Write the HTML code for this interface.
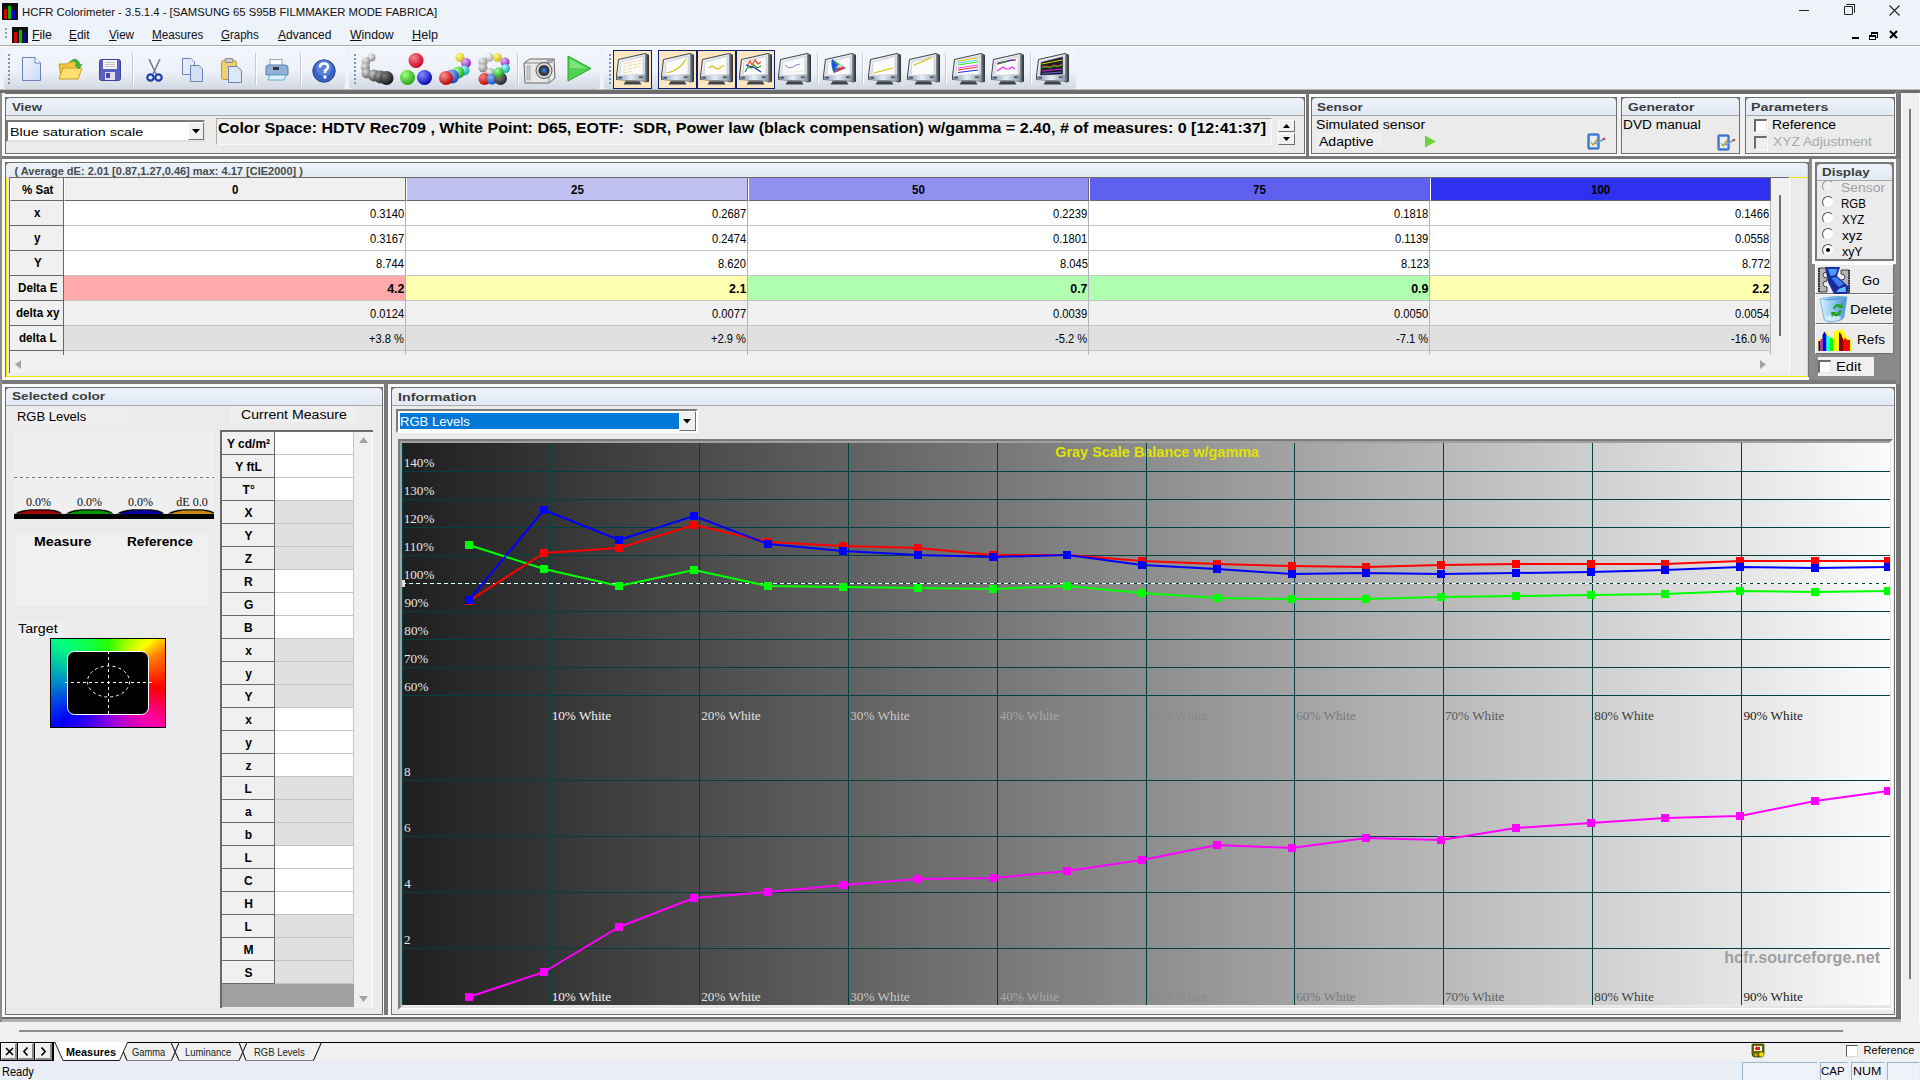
<!DOCTYPE html><html><head><meta charset="utf-8"><title>HCFR</title><style>
*{margin:0;padding:0;box-sizing:border-box}
html,body{width:1920px;height:1080px;overflow:hidden;background:#f0f0f0;font-family:"Liberation Sans",sans-serif;font-size:12px;color:#000}
.a{position:absolute}
.t{position:absolute;white-space:nowrap;line-height:1}
.hdr{position:absolute;background:linear-gradient(#eef3fa,#e2e9f4);border-bottom:1px solid #a8a8a8;font-weight:bold;color:#3c3c3c;font-size:12px;padding-left:7px;line-height:16px;border-radius:4px 4px 0 0}
.pane{position:absolute;border:1px solid #6f6f6f;background:#ebebeb}
.u{text-decoration:underline}
</style></head><body>
<div class="a" style="left:0;top:0;width:1920px;height:23px;background:#eef2f9"></div>
<svg class="a" style="left:2px;top:3px" width="16" height="17"><rect x="0" y="0" width="16" height="17" fill="#111"/><rect x="2" y="6" width="3" height="10" fill="#d00"/><rect x="6" y="3" width="3" height="13" fill="#0b0"/><rect x="10" y="7" width="3" height="9" fill="#00c"/></svg>
<div class="t" style="left:22.09px;top:7.00px;font-size:11.30px;font-family:'Liberation Sans',sans-serif;color:#111;">HCFR Colorimeter - 3.5.1.4 - [SAMSUNG 65 S95B FILMMAKER MODE FABRICA]</div>
<div class="a" style="left:1799px;top:10px;width:10px;height:1px;background:#222"></div>
<div class="a" style="left:1844px;top:6px;width:9px;height:9px;border:1px solid #222;border-radius:1px"></div><div class="a" style="left:1846px;top:4px;width:9px;height:9px;border-top:1px solid #222;border-right:1px solid #222;border-radius:1px"></div>
<svg class="a" style="left:1889px;top:5px" width="11" height="11"><path d="M0.5 0.5L10.5 10.5M10.5 0.5L0.5 10.5" stroke="#222" stroke-width="1.1"/></svg>
<div class="a" style="left:0;top:23px;width:1920px;height:22px;background:#eef2f9"></div>
<div class="a" style="left:0;top:45px;width:1920px;height:1px;background:#a9a9a9"></div>
<div class="a" style="left:5px;top:28px;width:2px;height:12px;background:repeating-linear-gradient(#8aa0c0 0 2px,transparent 2px 4px)"></div>
<svg class="a" style="left:12px;top:27px" width="16" height="16"><rect width="16" height="16" fill="#111"/><rect x="2" y="5" width="3" height="11" fill="#d00"/><rect x="7" y="3" width="3" height="13" fill="#0b0"/><rect x="11" y="6" width="3" height="10" fill="#00c"/></svg>
<div class="t" style="left:31.51px;top:29.00px;font-size:12.00px;font-family:'Liberation Sans',sans-serif;color:#111;transform:scaleX(1.0347);transform-origin:0 0;"><span class="u">F</span>ile</div>
<div class="t" style="left:69.05px;top:29.00px;font-size:12.00px;font-family:'Liberation Sans',sans-serif;color:#111;transform:scaleX(0.9909);transform-origin:0 0;"><span class="u">E</span>dit</div>
<div class="t" style="left:108.75px;top:29.00px;font-size:12.00px;font-family:'Liberation Sans',sans-serif;color:#111;transform:scaleX(0.9690);transform-origin:0 0;"><span class="u">V</span>iew</div>
<div class="t" style="left:152.06px;top:29.00px;font-size:12.00px;font-family:'Liberation Sans',sans-serif;color:#111;transform:scaleX(0.9747);transform-origin:0 0;"><span class="u">M</span>easures</div>
<div class="t" style="left:221.42px;top:29.00px;font-size:12.00px;font-family:'Liberation Sans',sans-serif;color:#111;transform:scaleX(0.9585);transform-origin:0 0;"><span class="u">G</span>raphs</div>
<div class="t" style="left:278.00px;top:29.00px;font-size:12.00px;font-family:'Liberation Sans',sans-serif;color:#111;"><span class="u">A</span>dvanced</div>
<div class="t" style="left:350.00px;top:29.00px;font-size:12.00px;font-family:'Liberation Sans',sans-serif;color:#111;transform:scaleX(1.0241);transform-origin:0 0;"><span class="u">W</span>indow</div>
<div class="t" style="left:411.99px;top:29.00px;font-size:12.00px;font-family:'Liberation Sans',sans-serif;color:#111;transform:scaleX(1.0551);transform-origin:0 0;"><span class="u">H</span>elp</div>
<div class="a" style="left:1852px;top:37px;width:7px;height:2px;background:#000"></div>
<div class="a" style="left:1871px;top:32px;width:7px;height:6px;border:1px solid #000;border-top-width:2px"></div><div class="a" style="left:1869px;top:35px;width:7px;height:5px;border:1px solid #000;border-top-width:2px;background:#eff3f9"></div>
<svg class="a" style="left:1889px;top:30px" width="9" height="9"><path d="M1 1L8 8M8 1L1 8" stroke="#000" stroke-width="2.2"/></svg>
<div class="a" style="left:0;top:46px;width:1920px;height:44px;background:#eef2f9;border-top:1px solid #fff"></div>
<div class="a" style="left:4px;top:48px;width:341px;height:41px;border-radius:4px;background:linear-gradient(#f3f6fb 0%,#eef2f8 55%,#d3d9e3 100%)"></div>
<div class="a" style="left:349px;top:48px;width:251px;height:41px;border-radius:4px;background:linear-gradient(#f3f6fb 0%,#eef2f8 55%,#d3d9e3 100%)"></div>
<div class="a" style="left:604px;top:48px;width:472px;height:41px;border-radius:4px;background:linear-gradient(#f3f6fb 0%,#eef2f8 55%,#d3d9e3 100%)"></div>
<div class="a" style="left:8px;top:54px;width:2px;height:30px;background:repeating-linear-gradient(#7d96bd 0 2px,transparent 2px 4px)"></div>
<div class="a" style="left:354px;top:54px;width:2px;height:30px;background:repeating-linear-gradient(#7d96bd 0 2px,transparent 2px 4px)"></div>
<div class="a" style="left:609px;top:54px;width:2px;height:30px;background:repeating-linear-gradient(#7d96bd 0 2px,transparent 2px 4px)"></div>
<div class="a" style="left:0;top:89px;width:1920px;height:1px;background:#b8bcc2"></div><div class="a" style="left:0;top:90px;width:1920px;height:4px;background:#6d6d6d"></div>
<div class="a" style="left:132px;top:53px;width:1px;height:32px;background:#c5ccd6"></div><div class="a" style="left:133px;top:53px;width:1px;height:32px;background:#fff"></div>
<div class="a" style="left:255px;top:53px;width:1px;height:32px;background:#c5ccd6"></div><div class="a" style="left:256px;top:53px;width:1px;height:32px;background:#fff"></div>
<div class="a" style="left:300px;top:53px;width:1px;height:32px;background:#c5ccd6"></div><div class="a" style="left:301px;top:53px;width:1px;height:32px;background:#fff"></div>
<div class="a" style="left:517px;top:53px;width:1px;height:32px;background:#c5ccd6"></div><div class="a" style="left:518px;top:53px;width:1px;height:32px;background:#fff"></div>
<div class="a" style="left:817px;top:53px;width:1px;height:32px;background:#c5ccd6"></div><div class="a" style="left:818px;top:53px;width:1px;height:32px;background:#fff"></div>
<div class="a" style="left:862px;top:53px;width:1px;height:32px;background:#c5ccd6"></div><div class="a" style="left:863px;top:53px;width:1px;height:32px;background:#fff"></div>
<div class="a" style="left:945px;top:53px;width:1px;height:32px;background:#c5ccd6"></div><div class="a" style="left:946px;top:53px;width:1px;height:32px;background:#fff"></div>
<div class="a" style="left:1030px;top:53px;width:1px;height:32px;background:#c5ccd6"></div><div class="a" style="left:1031px;top:53px;width:1px;height:32px;background:#fff"></div>
<svg class="a" style="left:22px;top:57px" width="19" height="24"><defs><linearGradient id="gd" x1="0" y1="0" x2="1" y2="1"><stop offset="0" stop-color="#f4f8ff"/><stop offset="1" stop-color="#c9d9f3"/></linearGradient></defs><path d="M0.5 0.5H13L18.5 6V23.5H0.5Z" fill="url(#gd)" stroke="#6b83b8"/><path d="M13 0.5V6H18.5" fill="#fff" stroke="#6b83b8"/></svg>
<svg class="a" style="left:58px;top:58px" width="25" height="23"><path d="M1 6H9L11 4H19V20H3Z" fill="#f0c840" stroke="#c9a020"/><path d="M1 21L5 10H24L20 21Z" fill="#ffe070" stroke="#c9a020"/><path d="M12 4C16 -1 21 1 22 7L24 6L21 11L17 7L19 7C18 3 15 2 12 4Z" fill="#3cb83c" stroke="#2a8a2a" stroke-width="0.6"/></svg>
<svg class="a" style="left:99px;top:59px" width="22" height="22"><rect x="0.5" y="0.5" width="21" height="21" rx="2" fill="#5a5fc0" stroke="#3e4398"/><rect x="4" y="1" width="14" height="9" fill="#f4f4f4"/><path d="M6 3.5H16M6 5.5H16M6 7.5H16" stroke="#aaa" stroke-width="0.7"/><rect x="6" y="13" width="10" height="8" fill="#dde"/><rect x="7" y="14" width="4" height="5" fill="#4448a8"/></svg>
<svg class="a" style="left:146px;top:59px" width="17" height="23"><path d="M3 0L10 15M14 0L7 15" stroke="#707a8a" stroke-width="1.5"/><circle cx="4.5" cy="18.5" r="3.2" fill="none" stroke="#1a3fb0" stroke-width="2.2"/><circle cx="12.5" cy="18.5" r="3.2" fill="none" stroke="#1a3fb0" stroke-width="2.2"/></svg>
<svg class="a" style="left:182px;top:58px" width="22" height="24"><path d="M0.5 0.5H9L12.5 4V16.5H0.5Z" fill="#e4ecfa" stroke="#6b83b8"/><path d="M8.5 7.5H17L20.5 11V23.5H8.5Z" fill="#d2e0f6" stroke="#6b83b8"/></svg>
<svg class="a" style="left:221px;top:58px" width="21" height="25"><rect x="0.5" y="2.5" width="15" height="19" rx="2" fill="#f0d070" stroke="#b89840"/><rect x="4" y="0.5" width="8" height="4" rx="1" fill="#ccc" stroke="#888"/><path d="M7.5 8.5H16L20.5 12.5V24.5H7.5Z" fill="#dce8fa" stroke="#6b83b8"/></svg>
<svg class="a" style="left:265px;top:59px" width="24" height="23"><rect x="5" y="0.5" width="12" height="7" fill="#fff" stroke="#9ab"/><path d="M1 8Q1 6 4 6H20Q23 6 23 9V16H1Z" fill="#8fb0d8" stroke="#5f7fa8"/><rect x="8" y="8" width="6" height="3" fill="#333"/><path d="M5 16L3 21H19L21 16Z" fill="#dfefff" stroke="#6ac"/></svg>
<svg class="a" style="left:312px;top:59px" width="24" height="24"><circle cx="12" cy="12" r="11.2" fill="#3a62c8" stroke="#22408a" stroke-width="1"/><circle cx="12" cy="9" r="8" fill="#6f95e6" opacity="0.6"/><path d="M8 8.5Q8 4.5 12 4.5Q16 4.5 16 8Q16 10 13 11.5V14" stroke="#fff" stroke-width="2.6" fill="none"/><circle cx="13" cy="18" r="1.7" fill="#fff"/></svg>
<svg class="a" style="left:361px;top:53px" width="33" height="33"><defs><radialGradient id="bg0" cx="0.35" cy="0.3" r="0.75"><stop offset="0" stop-color="#f8f8f8"/><stop offset="1" stop-color="#8a8a8a"/></radialGradient><radialGradient id="bg1" cx="0.35" cy="0.3" r="0.75"><stop offset="0" stop-color="#f0f0f0"/><stop offset="1" stop-color="#808080"/></radialGradient><radialGradient id="bg2" cx="0.35" cy="0.3" r="0.75"><stop offset="0" stop-color="#e8e8e8"/><stop offset="1" stop-color="#707070"/></radialGradient><radialGradient id="bg3" cx="0.35" cy="0.3" r="0.75"><stop offset="0" stop-color="#e0e0e0"/><stop offset="1" stop-color="#606060"/></radialGradient><radialGradient id="bg4" cx="0.35" cy="0.3" r="0.75"><stop offset="0" stop-color="#c8c8c8"/><stop offset="1" stop-color="#404040"/></radialGradient><radialGradient id="bg5" cx="0.35" cy="0.3" r="0.75"><stop offset="0" stop-color="#a0a0a0"/><stop offset="1" stop-color="#282828"/></radialGradient><radialGradient id="bg6" cx="0.35" cy="0.3" r="0.75"><stop offset="0" stop-color="#808080"/><stop offset="1" stop-color="#101010"/></radialGradient><radialGradient id="bg7" cx="0.35" cy="0.3" r="0.75"><stop offset="0" stop-color="#ff8090"/><stop offset="1" stop-color="#c0001a"/></radialGradient><radialGradient id="bg8" cx="0.35" cy="0.3" r="0.75"><stop offset="0" stop-color="#a0ff80"/><stop offset="1" stop-color="#20a010"/></radialGradient><radialGradient id="bg9" cx="0.35" cy="0.3" r="0.75"><stop offset="0" stop-color="#8090ff"/><stop offset="1" stop-color="#0000b0"/></radialGradient><radialGradient id="bg10" cx="0.35" cy="0.3" r="0.75"><stop offset="0" stop-color="#ffff90"/><stop offset="1" stop-color="#d0b800"/></radialGradient><radialGradient id="bg11" cx="0.35" cy="0.3" r="0.75"><stop offset="0" stop-color="#f0b0ff"/><stop offset="1" stop-color="#8020b0"/></radialGradient><radialGradient id="bg12" cx="0.35" cy="0.3" r="0.75"><stop offset="0" stop-color="#b0ffff"/><stop offset="1" stop-color="#10a0b0"/></radialGradient><radialGradient id="bg13" cx="0.35" cy="0.3" r="0.75"><stop offset="0" stop-color="#a0ffa0"/><stop offset="1" stop-color="#10a010"/></radialGradient><radialGradient id="bg14" cx="0.35" cy="0.3" r="0.75"><stop offset="0" stop-color="#a0c0ff"/><stop offset="1" stop-color="#1040c0"/></radialGradient><radialGradient id="bg15" cx="0.35" cy="0.3" r="0.75"><stop offset="0" stop-color="#ff9090"/><stop offset="1" stop-color="#b00000"/></radialGradient><radialGradient id="bg16" cx="0.35" cy="0.3" r="0.75"><stop offset="0" stop-color="#ffffff"/><stop offset="1" stop-color="#a0a0a0"/></radialGradient><radialGradient id="bg17" cx="0.35" cy="0.3" r="0.75"><stop offset="0" stop-color="#ffff90"/><stop offset="1" stop-color="#d0b000"/></radialGradient><radialGradient id="bg18" cx="0.35" cy="0.3" r="0.75"><stop offset="0" stop-color="#f0f0f0"/><stop offset="1" stop-color="#888"/></radialGradient><radialGradient id="bg19" cx="0.35" cy="0.3" r="0.75"><stop offset="0" stop-color="#e8e8e8"/><stop offset="1" stop-color="#808080"/></radialGradient><radialGradient id="bg20" cx="0.35" cy="0.3" r="0.75"><stop offset="0" stop-color="#f0f0f0"/><stop offset="1" stop-color="#909090"/></radialGradient><radialGradient id="bg21" cx="0.35" cy="0.3" r="0.75"><stop offset="0" stop-color="#ff8080"/><stop offset="1" stop-color="#b00000"/></radialGradient><radialGradient id="bg22" cx="0.35" cy="0.3" r="0.75"><stop offset="0" stop-color="#90b0ff"/><stop offset="1" stop-color="#1050c0"/></radialGradient><radialGradient id="bg23" cx="0.35" cy="0.3" r="0.75"><stop offset="0" stop-color="#909090"/><stop offset="1" stop-color="#202020"/></radialGradient></defs><circle cx="10.5" cy="4.5" r="4" fill="url(#bg0)"/><circle cx="5" cy="8.5" r="4.3" fill="url(#bg1)"/><circle cx="4.5" cy="14.5" r="4.5" fill="url(#bg2)"/><circle cx="5.5" cy="20.5" r="5" fill="url(#bg3)"/><circle cx="13" cy="22.5" r="6" fill="url(#bg4)"/><circle cx="19.5" cy="24" r="6.5" fill="url(#bg5)"/><circle cx="25.5" cy="25" r="7" fill="url(#bg6)"/></svg>
<svg class="a" style="left:400px;top:53px" width="33" height="33"><circle cx="16" cy="7.5" r="7.5" fill="url(#bg7)"/><circle cx="7.5" cy="24.5" r="7.5" fill="url(#bg8)"/><circle cx="24.5" cy="24.5" r="7.5" fill="url(#bg9)"/></svg>
<svg class="a" style="left:439px;top:53px" width="33" height="33"><circle cx="21" cy="4.5" r="4.5" fill="url(#bg10)"/><circle cx="27" cy="10" r="5" fill="url(#bg11)"/><circle cx="25.5" cy="17.5" r="5" fill="url(#bg12)"/><circle cx="19.5" cy="19.5" r="6" fill="url(#bg13)"/><circle cx="13" cy="23.5" r="7" fill="url(#bg14)"/><circle cx="7" cy="25" r="7" fill="url(#bg15)"/></svg>
<svg class="a" style="left:478px;top:53px" width="33" height="33"><circle cx="11.5" cy="4.5" r="4.3" fill="url(#bg16)"/><circle cx="19.5" cy="4.5" r="4.3" fill="url(#bg17)"/><circle cx="27" cy="9" r="4.5" fill="url(#bg11)"/><circle cx="27.5" cy="15.5" r="4.5" fill="url(#bg12)"/><circle cx="5" cy="9" r="4.5" fill="url(#bg18)"/><circle cx="5" cy="15" r="4.5" fill="url(#bg19)"/><circle cx="12" cy="20" r="5" fill="url(#bg20)"/><circle cx="6.5" cy="26" r="6" fill="url(#bg21)"/><circle cx="14" cy="26" r="5.5" fill="url(#bg22)"/><circle cx="22.5" cy="25.5" r="6.5" fill="url(#bg23)"/><circle cx="20.5" cy="19.5" r="5" fill="url(#bg13)"/></svg>
<svg class="a" style="left:523px;top:54px" width="33" height="31"><path d="M1 9L7 5H31L32 24L26 29H2Z" fill="#e8e8e8" stroke="#666"/><path d="M1 9H26V29" fill="none" stroke="#888"/><path d="M26 9L32 5" stroke="#888"/><rect x="4" y="12" width="3" height="14" fill="#ccc" stroke="#888" stroke-width="0.5"/><circle cx="21" cy="16.5" r="8" fill="#d8d8d8" stroke="#555"/><circle cx="21" cy="16.5" r="5.5" fill="#3a3a3a"/><circle cx="21" cy="16.5" r="2.5" fill="#2a6ad8"/><rect x="24" y="6" width="5" height="2.5" fill="#bbb" stroke="#777" stroke-width="0.5"/></svg>
<svg class="a" style="left:567px;top:55px" width="25" height="27"><path d="M1 1L24 13.5L1 26Z" fill="#52d052" stroke="#2aa52a"/><path d="M3 4L20 13.5L3 13Z" fill="#8ef08e" opacity="0.7"/></svg>
<div class="a" style="left:613px;top:50px;width:39px;height:39px;border:1px solid #0a1f6e;background:#fde7c3"></div>
<div class="a" style="left:658px;top:50px;width:39px;height:39px;border:1px solid #0a1f6e;background:#fde7c3"></div>
<div class="a" style="left:697px;top:50px;width:39px;height:39px;border:1px solid #0a1f6e;background:#fde7c3"></div>
<div class="a" style="left:736px;top:50px;width:39px;height:39px;border:1px solid #0a1f6e;background:#fde7c3"></div>
<svg width="0" height="0" style="position:absolute"><defs><linearGradient id="mface" x1="0" y1="0" x2="1" y2="1"><stop offset="0" stop-color="#f4f6f8"/><stop offset="1" stop-color="#c8d0da"/></linearGradient><linearGradient id="mside" x1="0" y1="0" x2="1" y2="0"><stop offset="0" stop-color="#8a929c"/><stop offset="1" stop-color="#2a2e34"/></linearGradient><linearGradient id="mbez" x1="0" y1="0" x2="1" y2="0"><stop offset="0" stop-color="#8096b4"/><stop offset="0.5" stop-color="#e8eef4"/><stop offset="1" stop-color="#8a9ab0"/></linearGradient></defs></svg>
<svg class="a" style="left:616px;top:52px" width="34" height="34"><path d="M2.5 7.5L29 1.5L32.5 3V29.5L29 30V29L0.5 27.5V24Z" fill="url(#mface)" stroke="#2c3139" stroke-width="0.9"/><path d="M29 1.5L32.5 3V29.5L29 30Z" fill="url(#mside)"/><path d="M5 10L27 4.5V22.5L4 23.5Z" fill="#fbfbfb" stroke="#b8c0c8" stroke-width="0.6"/><path d="M0.8 24L29 22.8V29L0.8 27.5Z" fill="url(#mbez)"/><rect x="2.5" y="25" width="3.5" height="1.4" fill="#444"/><rect x="23" y="24.5" width="3.5" height="1.4" fill="#444"/><path d="M7 12L11 11M12 11L16 10M17 10L21 9M22 9L25 8M7 15L11 14M12 14L16 13M17 13L21 12M22 12L25 11M7 18L11 17M12 17L16 16M17 16L21 15M22 15L25 14M7 21L11 20.5M12 20L16 19.5" stroke="#f0d8a8" stroke-width="1.2"/><path d="M9.5 29.2H23.5L25.5 32.5H7.5Z" fill="#3c424a"/></svg>
<svg class="a" style="left:661px;top:52px" width="34" height="34"><path d="M2.5 7.5L29 1.5L32.5 3V29.5L29 30V29L0.5 27.5V24Z" fill="url(#mface)" stroke="#2c3139" stroke-width="0.9"/><path d="M29 1.5L32.5 3V29.5L29 30Z" fill="url(#mside)"/><path d="M5 10L27 4.5V22.5L4 23.5Z" fill="#fbfbfb" stroke="#b8c0c8" stroke-width="0.6"/><path d="M0.8 24L29 22.8V29L0.8 27.5Z" fill="url(#mbez)"/><rect x="2.5" y="25" width="3.5" height="1.4" fill="#444"/><rect x="23" y="24.5" width="3.5" height="1.4" fill="#444"/><path d="M5.5 21Q18 19 25 7" stroke="#d0c000" stroke-width="1.2" fill="none"/><path d="M9.5 29.2H23.5L25.5 32.5H7.5Z" fill="#3c424a"/></svg>
<svg class="a" style="left:700px;top:52px" width="34" height="34"><path d="M2.5 7.5L29 1.5L32.5 3V29.5L29 30V29L0.5 27.5V24Z" fill="url(#mface)" stroke="#2c3139" stroke-width="0.9"/><path d="M29 1.5L32.5 3V29.5L29 30Z" fill="url(#mside)"/><path d="M5 10L27 4.5V22.5L4 23.5Z" fill="#fbfbfb" stroke="#b8c0c8" stroke-width="0.6"/><path d="M0.8 24L29 22.8V29L0.8 27.5Z" fill="url(#mbez)"/><rect x="2.5" y="25" width="3.5" height="1.4" fill="#444"/><rect x="23" y="24.5" width="3.5" height="1.4" fill="#444"/><path d="M9 16Q12 13 14 15Q17 18 20 16Q22 14 24 13.5" stroke="#d0c000" stroke-width="1.2" fill="none"/><path d="M9.5 29.2H23.5L25.5 32.5H7.5Z" fill="#3c424a"/></svg>
<svg class="a" style="left:739px;top:52px" width="34" height="34"><path d="M2.5 7.5L29 1.5L32.5 3V29.5L29 30V29L0.5 27.5V24Z" fill="url(#mface)" stroke="#2c3139" stroke-width="0.9"/><path d="M29 1.5L32.5 3V29.5L29 30Z" fill="url(#mside)"/><path d="M5 10L27 4.5V22.5L4 23.5Z" fill="#fbfbfb" stroke="#b8c0c8" stroke-width="0.6"/><path d="M0.8 24L29 22.8V29L0.8 27.5Z" fill="url(#mbez)"/><rect x="2.5" y="25" width="3.5" height="1.4" fill="#444"/><rect x="23" y="24.5" width="3.5" height="1.4" fill="#444"/><path d="M8 14L11 9L13 13L16 8L19 12L22 10" stroke="#e85020" stroke-width="1.3" fill="none"/><path d="M6 20L9 15L12 16L15 13L18 16L22 14" stroke="#20a020" stroke-width="1.3" fill="none"/><path d="M7 13L10 14L13 15L16 16L19 18L22 20" stroke="#2030c0" stroke-width="1.3" fill="none"/><path d="M9.5 29.2H23.5L25.5 32.5H7.5Z" fill="#3c424a"/></svg>
<svg class="a" style="left:778px;top:52px" width="34" height="34"><path d="M2.5 7.5L29 1.5L32.5 3V29.5L29 30V29L0.5 27.5V24Z" fill="url(#mface)" stroke="#2c3139" stroke-width="0.9"/><path d="M29 1.5L32.5 3V29.5L29 30Z" fill="url(#mside)"/><path d="M5 10L27 4.5V22.5L4 23.5Z" fill="#fbfbfb" stroke="#b8c0c8" stroke-width="0.6"/><path d="M0.8 24L29 22.8V29L0.8 27.5Z" fill="url(#mbez)"/><rect x="2.5" y="25" width="3.5" height="1.4" fill="#444"/><rect x="23" y="24.5" width="3.5" height="1.4" fill="#444"/><path d="M7 13L11 16L15 15L18 13L22 12" stroke="#8080e0" stroke-width="1" fill="none"/><path d="M6 21L26 19" stroke="#ddd" stroke-width="0.6"/><path d="M9.5 29.2H23.5L25.5 32.5H7.5Z" fill="#3c424a"/></svg>
<svg class="a" style="left:823px;top:52px" width="34" height="34"><path d="M2.5 7.5L29 1.5L32.5 3V29.5L29 30V29L0.5 27.5V24Z" fill="url(#mface)" stroke="#2c3139" stroke-width="0.9"/><path d="M29 1.5L32.5 3V29.5L29 30Z" fill="url(#mside)"/><path d="M5 10L27 4.5V22.5L4 23.5Z" fill="#fbfbfb" stroke="#b8c0c8" stroke-width="0.6"/><path d="M0.8 24L29 22.8V29L0.8 27.5Z" fill="url(#mbez)"/><rect x="2.5" y="25" width="3.5" height="1.4" fill="#444"/><rect x="23" y="24.5" width="3.5" height="1.4" fill="#444"/><path d="M9 7Q7 14 11 21L23 16Z" fill="#30c030"/><path d="M11 21L23 16L17 14Z" fill="#e03060"/><path d="M9 7Q8 14 11 21L15 14Z" fill="#2050f0"/><path d="M12 16L17 12L20 15Z" fill="#fff" opacity="0.7"/><path d="M9.5 29.2H23.5L25.5 32.5H7.5Z" fill="#3c424a"/></svg>
<svg class="a" style="left:868px;top:52px" width="34" height="34"><path d="M2.5 7.5L29 1.5L32.5 3V29.5L29 30V29L0.5 27.5V24Z" fill="url(#mface)" stroke="#2c3139" stroke-width="0.9"/><path d="M29 1.5L32.5 3V29.5L29 30Z" fill="url(#mside)"/><path d="M5 10L27 4.5V22.5L4 23.5Z" fill="#fbfbfb" stroke="#b8c0c8" stroke-width="0.6"/><path d="M0.8 24L29 22.8V29L0.8 27.5Z" fill="url(#mbez)"/><rect x="2.5" y="25" width="3.5" height="1.4" fill="#444"/><rect x="23" y="24.5" width="3.5" height="1.4" fill="#444"/><path d="M6 21L25 16" stroke="#d0c000" stroke-width="1.2"/><path d="M9.5 29.2H23.5L25.5 32.5H7.5Z" fill="#3c424a"/></svg>
<svg class="a" style="left:907px;top:52px" width="34" height="34"><path d="M2.5 7.5L29 1.5L32.5 3V29.5L29 30V29L0.5 27.5V24Z" fill="url(#mface)" stroke="#2c3139" stroke-width="0.9"/><path d="M29 1.5L32.5 3V29.5L29 30Z" fill="url(#mside)"/><path d="M5 10L27 4.5V22.5L4 23.5Z" fill="#fbfbfb" stroke="#b8c0c8" stroke-width="0.6"/><path d="M0.8 24L29 22.8V29L0.8 27.5Z" fill="url(#mbez)"/><rect x="2.5" y="25" width="3.5" height="1.4" fill="#444"/><rect x="23" y="24.5" width="3.5" height="1.4" fill="#444"/><path d="M7 13L25 5.5" stroke="#d0c000" stroke-width="1.2"/><path d="M9.5 29.2H23.5L25.5 32.5H7.5Z" fill="#3c424a"/></svg>
<svg class="a" style="left:952px;top:52px" width="34" height="34"><path d="M2.5 7.5L29 1.5L32.5 3V29.5L29 30V29L0.5 27.5V24Z" fill="url(#mface)" stroke="#2c3139" stroke-width="0.9"/><path d="M29 1.5L32.5 3V29.5L29 30Z" fill="url(#mside)"/><path d="M5 10L27 4.5V22.5L4 23.5Z" fill="#fbfbfb" stroke="#b8c0c8" stroke-width="0.6"/><path d="M0.8 24L29 22.8V29L0.8 27.5Z" fill="url(#mbez)"/><rect x="2.5" y="25" width="3.5" height="1.4" fill="#444"/><rect x="23" y="24.5" width="3.5" height="1.4" fill="#444"/><path d="M6 9L26 6" stroke="#e0d000" stroke-width="1"/><path d="M6 11L26 8" stroke="#30e0e0" stroke-width="1"/><path d="M6 13L26 10" stroke="#30e030" stroke-width="1"/><path d="M6 16L26 13" stroke="#f040f0" stroke-width="1"/><path d="M6 18L26 15" stroke="#f03030" stroke-width="1"/><path d="M6 20.5L26 18" stroke="#2030f0" stroke-width="1"/><path d="M9.5 29.2H23.5L25.5 32.5H7.5Z" fill="#3c424a"/></svg>
<svg class="a" style="left:991px;top:52px" width="34" height="34"><path d="M2.5 7.5L29 1.5L32.5 3V29.5L29 30V29L0.5 27.5V24Z" fill="url(#mface)" stroke="#2c3139" stroke-width="0.9"/><path d="M29 1.5L32.5 3V29.5L29 30Z" fill="url(#mside)"/><path d="M5 10L27 4.5V22.5L4 23.5Z" fill="#fbfbfb" stroke="#b8c0c8" stroke-width="0.6"/><path d="M0.8 24L29 22.8V29L0.8 27.5Z" fill="url(#mbez)"/><rect x="2.5" y="25" width="3.5" height="1.4" fill="#444"/><rect x="23" y="24.5" width="3.5" height="1.4" fill="#444"/><path d="M6 12L10 11L13 10L17 9L21 8L25 8" stroke="#e03030" stroke-width="1.4" fill="none"/><path d="M7 11L11 10L14 10L18 8.5L22 8.5" stroke="#2040e0" stroke-width="1.1" fill="none"/><path d="M9 11L14 10L17 9" stroke="#20b020" stroke-width="1.1" fill="none"/><path d="M6 19L9 17L12 15L15 17L18 17L21 15L24 17" stroke="#f020f0" stroke-width="1.2" fill="none"/><path d="M9.5 29.2H23.5L25.5 32.5H7.5Z" fill="#3c424a"/></svg>
<svg class="a" style="left:1036px;top:52px" width="34" height="34"><path d="M2.5 7.5L29 1.5L32.5 3V29.5L29 30V29L0.5 27.5V24Z" fill="url(#mface)" stroke="#2c3139" stroke-width="0.9"/><path d="M29 1.5L32.5 3V29.5L29 30Z" fill="url(#mside)"/><path d="M5 10L27 4.5V22.5L4 23.5Z" fill="#1c1c24" stroke="#b8c0c8" stroke-width="0.6"/><path d="M0.8 24L29 22.8V29L0.8 27.5Z" fill="url(#mbez)"/><rect x="2.5" y="25" width="3.5" height="1.4" fill="#444"/><rect x="23" y="24.5" width="3.5" height="1.4" fill="#444"/><path d="M6 12L26 8" stroke="#e0d000" stroke-width="1"/><path d="M6 15L10 14L14 15L18 13L22 14L26 12" stroke="#e06030" stroke-width="1" fill="none"/><path d="M6 16L10 15L14 16L18 14L22 15L26 13" stroke="#30b030" stroke-width="1" fill="none"/><path d="M6 19L26 17" stroke="#f020f0" stroke-width="1"/><path d="M6 21.5L26 20" stroke="#6060e0" stroke-width="1"/><path d="M9.5 29.2H23.5L25.5 32.5H7.5Z" fill="#3c424a"/></svg>
<div class="a" style="left:0;top:93px;width:2px;height:949px;background:#8c8c8c"></div>
<div class="a" style="left:2px;top:93px;width:3px;height:949px;background:#fbfbfb"></div>
<div class="a" style="left:2px;top:94px;width:1899px;height:3px;background:#fbfbfb"></div>
<div class="a" style="left:1895px;top:93px;width:1px;height:63px;background:#fbfbfb"></div>
<div class="a" style="left:1895px;top:384px;width:1px;height:633px;background:#fbfbfb"></div>
<div class="a" style="left:1896px;top:90px;width:5px;height:932px;background:#777"></div>
<div class="a" style="left:1901px;top:93px;width:18px;height:929px;background:#f0f0f0;border-left:1px solid #fff"></div>
<div class="a" style="left:1909px;top:109px;width:2px;height:870px;background:#7a7a7a"></div>
<div class="a" style="left:1919px;top:93px;width:1px;height:949px;background:#fff"></div>
<div class="a" style="left:2px;top:154px;width:1894px;height:2px;background:#fbfbfb"></div>
<div class="a" style="left:2px;top:156px;width:1894px;height:3px;background:#777"></div>
<div class="a" style="left:2px;top:159px;width:1894px;height:3px;background:#fbfbfb"></div>
<div class="a" style="left:1305px;top:97px;width:1px;height:57px;background:#fbfbfb"></div>
<div class="a" style="left:1306px;top:93px;width:3px;height:63px;background:#777"></div>
<div class="a" style="left:1309px;top:97px;width:2px;height:57px;background:#fbfbfb"></div>
<div class="a" style="left:1617px;top:97px;width:4px;height:57px;background:#f0f0f0"></div>
<div class="a" style="left:1740px;top:97px;width:5px;height:57px;background:#f0f0f0"></div>
<div class="pane" style="left:5px;top:97px;width:1300px;height:57px;;background:linear-gradient(#7c7c7c 0 6px,#ebebeb 6px)"></div>
<div class="hdr" style="left:6px;top:98px;width:1298px;height:18px"></div>
<div class="t" style="left:11.83px;top:102.00px;font-size:11.00px;font-family:'Liberation Sans',sans-serif;color:#3c3c3c;font-weight:bold;transform:scaleX(1.2068);transform-origin:0 0;">View</div>
<div class="a" style="left:6px;top:120px;width:199px;height:22px;border:2px solid #7a7a7a;border-right-color:#e0e0e0;border-bottom-color:#e0e0e0;background:#fff"></div>
<div class="t" style="left:9.85px;top:127.00px;font-size:11.50px;font-family:'Liberation Sans',sans-serif;color:#000;transform:scaleX(1.2483);transform-origin:0 0;">Blue saturation scale</div>
<div class="a" style="left:188px;top:122px;width:16px;height:18px;background:#f0f0f0;border-right:1px solid #777;border-bottom:1px solid #777;border-left:1px solid #fff;border-top:1px solid #fff"></div>
<svg class="a" style="left:192px;top:129px" width="8" height="5"><path d="M0 0H8L4 4.5Z" fill="#000"/></svg>
<div class="a" style="left:216px;top:118px;width:1056px;height:27px;background:#efefef;border-left:1px solid #b0b0b0;border-top:1px solid #a8a8a8;border-right:1px solid #fafafa;border-bottom:1px solid #fafafa"></div>
<div class="t" style="left:217.86px;top:120.00px;font-size:15.00px;font-family:'Liberation Sans',sans-serif;color:#000;font-weight:bold;transform:scaleX(1.0705);transform-origin:0 0;">Color Space: HDTV Rec709 , White Point: D65, EOTF:&nbsp; SDR, Power law (black compensation) w/gamma = 2.40, # of measures: 0 [12:41:37]</div>
<div class="a" style="left:1278px;top:120px;width:17px;height:12px;background:#f0f0f0;border:1px solid;border-color:#fff #6e6e6e #6e6e6e #fff"></div>
<div class="a" style="left:1278px;top:133px;width:17px;height:12px;background:#f0f0f0;border:1px solid;border-color:#fff #6e6e6e #6e6e6e #fff"></div>
<svg class="a" style="left:1283px;top:124px" width="7" height="4"><path d="M0 4H7L3.5 0Z" fill="#000"/></svg>
<svg class="a" style="left:1283px;top:137px" width="7" height="4"><path d="M0 0H7L3.5 4Z" fill="#000"/></svg>
<div class="pane" style="left:1311px;top:97px;width:306px;height:57px;background:linear-gradient(#7c7c7c 0 6px,#ebebeb 6px)"></div>
<div class="hdr" style="left:1312px;top:98px;width:304px;height:18px"></div>
<div class="t" style="left:1317.46px;top:102.00px;font-size:11.00px;font-family:'Liberation Sans',sans-serif;color:#3c3c3c;font-weight:bold;transform:scaleX(1.2266);transform-origin:0 0;">Sensor</div>
<div class="t" style="left:1315.76px;top:119.00px;font-size:12.00px;font-family:'Liberation Sans',sans-serif;color:#000;transform:scaleX(1.1777);transform-origin:0 0;">Simulated sensor</div>
<div class="a" style="left:1316px;top:133px;width:66px;height:16px;background:#efefef"></div>
<div class="t" style="left:1318.50px;top:136.00px;font-size:12.00px;font-family:'Liberation Sans',sans-serif;color:#000;transform:scaleX(1.1710);transform-origin:0 0;">Adaptive</div>
<svg class="a" style="left:1424px;top:135px" width="13" height="13"><path d="M1 0.5L12 6.5L1 12.5Z" fill="#6ed23e"/></svg>
<svg class="a" style="left:1587px;top:132px" width="19" height="19"><rect x="1" y="2" width="11" height="15" rx="1" fill="#5a9ae8" stroke="#1f4fa8"/><rect x="3" y="4" width="7" height="11" fill="#e8f0fc"/><path d="M4 10L6 13L11 6" stroke="#c8a020" stroke-width="1.3" fill="none"/><path d="M8 12L17 7" stroke="#6aa0e0" stroke-width="2"/><circle cx="17" cy="7" r="1.3" fill="#e04040"/></svg>
<div class="pane" style="left:1621px;top:97px;width:119px;height:57px;background:linear-gradient(#7c7c7c 0 6px,#ebebeb 6px)"></div>
<div class="hdr" style="left:1622px;top:98px;width:117px;height:18px"></div>
<div class="t" style="left:1627.84px;top:102.00px;font-size:11.00px;font-family:'Liberation Sans',sans-serif;color:#3c3c3c;font-weight:bold;transform:scaleX(1.2621);transform-origin:0 0;">Generator</div>
<div class="t" style="left:1622.80px;top:119.00px;font-size:12.00px;font-family:'Liberation Sans',sans-serif;color:#000;transform:scaleX(1.1433);transform-origin:0 0;">DVD manual</div>
<svg class="a" style="left:1717px;top:133px" width="19" height="19"><rect x="1" y="2" width="11" height="15" rx="1" fill="#5a9ae8" stroke="#1f4fa8"/><rect x="3" y="4" width="7" height="11" fill="#e8f0fc"/><path d="M4 10L6 13L11 6" stroke="#c8a020" stroke-width="1.3" fill="none"/><path d="M8 12L17 7" stroke="#6aa0e0" stroke-width="2"/><circle cx="17" cy="7" r="1.3" fill="#e04040"/></svg>
<div class="pane" style="left:1745px;top:97px;width:150px;height:57px;background:linear-gradient(#7c7c7c 0 6px,#ebebeb 6px)"></div>
<div class="hdr" style="left:1746px;top:98px;width:148px;height:18px"></div>
<div class="t" style="left:1751.08px;top:102.00px;font-size:11.00px;font-family:'Liberation Sans',sans-serif;color:#3c3c3c;font-weight:bold;transform:scaleX(1.2926);transform-origin:0 0;">Parameters</div>
<div class="a" style="left:1754px;top:119px;width:13px;height:13px;border-style:solid;border-width:2px 1px 1px 2px;border-color:#6a6a6a #e4e4e4 #e4e4e4 #6a6a6a;background:#fff;box-shadow:1px 1px 0 #fff"></div>
<div class="t" style="left:1771.89px;top:119.00px;font-size:12.00px;font-family:'Liberation Sans',sans-serif;color:#000;transform:scaleX(1.1568);transform-origin:0 0;">Reference</div>
<div class="a" style="left:1754px;top:136px;width:13px;height:13px;border-style:solid;border-width:2px 1px 1px 2px;border-color:#6a6a6a #e4e4e4 #e4e4e4 #6a6a6a;background:#f0f0f0;box-shadow:1px 1px 0 #fff"></div>
<div class="t" style="left:1772.72px;top:136.00px;font-size:12.00px;font-family:'Liberation Sans',sans-serif;color:#a8a8a8;transform:scaleX(1.1488);transform-origin:0 0;">XYZ Adjustment</div>
<div class="pane" style="left:5px;top:162px;width:1804px;height:215px;;background:linear-gradient(#7c7c7c 0 6px,#ebebeb 6px)"></div>
<div class="a" style="left:6px;top:165px;width:1802px;height:212px;border:1px solid #f0ec00;border-top:none"></div>
<div class="hdr" style="left:6px;top:163px;width:1802px;height:15px;border-bottom:none"></div>
<div class="t" style="left:14.51px;top:166.00px;font-size:11.00px;font-family:'Liberation Sans',sans-serif;color:#4a4a4a;font-weight:bold;">( Average dE: 2.01 [0.87,1.27,0.46] max: 4.17 [CIE2000] )</div>
<div class="a" style="left:1788px;top:177px;width:20px;height:1px;background:#f0ec00"></div>
<div class="a" style="left:1807px;top:166px;width:1px;height:12px;background:#f0ec00"></div>
<div class="a" style="left:9px;top:177px;width:1780px;height:196px;border-left:1px solid #6a6a6a;border-top:1px solid #6a6a6a;background:#f0f0f0"></div>
<div class="a" style="left:10px;top:178px;width:54px;height:23px;background:#f0f0f0;border-right:1px solid #6a6a6a;border-bottom:1px solid #6a6a6a;border-left:1px solid #fff"></div>
<div class="t" style="left:21.55px;top:184.00px;font-size:12.00px;font-family:'Liberation Sans',sans-serif;color:#000;font-weight:bold;transform:scaleX(0.9600);transform-origin:0 0;">% Sat</div>
<div class="a" style="left:64px;top:178px;width:342px;height:23px;background:#f0f0f0;border-right:1px solid #6a6a6a;border-bottom:1px solid #6a6a6a;border-left:1px solid #fff"></div>
<div class="t" style="left:232.10px;top:184.00px;font-size:12.00px;font-family:'Liberation Sans',sans-serif;color:#000;font-weight:bold;transform:scaleX(0.9600);transform-origin:0 0;">0</div>
<div class="a" style="left:406px;top:178px;width:342px;height:23px;background:#c0c0f0;border-right:1px solid #6a6a6a;border-bottom:1px solid #6a6a6a;border-left:1px solid #fff"></div>
<div class="t" style="left:570.88px;top:184.00px;font-size:12.00px;font-family:'Liberation Sans',sans-serif;color:#000;font-weight:bold;transform:scaleX(0.9600);transform-origin:0 0;">25</div>
<div class="a" style="left:748px;top:178px;width:341px;height:23px;background:#9090f0;border-right:1px solid #6a6a6a;border-bottom:1px solid #6a6a6a;border-left:1px solid #fff"></div>
<div class="t" style="left:912.44px;top:184.00px;font-size:12.00px;font-family:'Liberation Sans',sans-serif;color:#000;font-weight:bold;transform:scaleX(0.9600);transform-origin:0 0;">50</div>
<div class="a" style="left:1089px;top:178px;width:341px;height:23px;background:#6060f0;border-right:1px solid #6a6a6a;border-bottom:1px solid #6a6a6a;border-left:1px solid #fff"></div>
<div class="t" style="left:1253.32px;top:184.00px;font-size:12.00px;font-family:'Liberation Sans',sans-serif;color:#000;font-weight:bold;transform:scaleX(0.9600);transform-origin:0 0;">75</div>
<div class="a" style="left:1430px;top:178px;width:341px;height:23px;background:#3030f0;border-right:1px solid #6a6a6a;border-bottom:1px solid #6a6a6a;border-left:1px solid #fff"></div>
<div class="t" style="left:1591.07px;top:184.00px;font-size:12.00px;font-family:'Liberation Sans',sans-serif;color:#000;font-weight:bold;transform:scaleX(0.9600);transform-origin:0 0;">100</div>
<div class="a" style="left:10px;top:201px;width:54px;height:25px;background:#f0f0f0;border-right:1px solid #6a6a6a;border-bottom:1px solid #6a6a6a"></div>
<div class="t" style="left:34.27px;top:207.00px;font-size:12.00px;font-family:'Liberation Sans',sans-serif;color:#000;font-weight:bold;transform:scaleX(0.9700);transform-origin:0 0;">x</div>
<div class="a" style="left:64px;top:201px;width:342px;height:25px;background:#fff;border-right:1px solid #b4b4b4;border-bottom:1px solid #c4c4c4"></div>
<div class="t" style="left:370.24px;top:208.00px;font-size:12.40px;font-family:'Liberation Sans',sans-serif;color:#000;transform:scaleX(0.9000);transform-origin:0 0;">0.3140</div>
<div class="a" style="left:406px;top:201px;width:342px;height:25px;background:#fff;border-right:1px solid #b4b4b4;border-bottom:1px solid #c4c4c4"></div>
<div class="t" style="left:712.35px;top:208.00px;font-size:12.40px;font-family:'Liberation Sans',sans-serif;color:#000;transform:scaleX(0.9000);transform-origin:0 0;">0.2687</div>
<div class="a" style="left:748px;top:201px;width:341px;height:25px;background:#fff;border-right:1px solid #b4b4b4;border-bottom:1px solid #c4c4c4"></div>
<div class="t" style="left:1053.35px;top:208.00px;font-size:12.40px;font-family:'Liberation Sans',sans-serif;color:#000;transform:scaleX(0.9000);transform-origin:0 0;">0.2239</div>
<div class="a" style="left:1089px;top:201px;width:341px;height:25px;background:#fff;border-right:1px solid #b4b4b4;border-bottom:1px solid #c4c4c4"></div>
<div class="t" style="left:1394.30px;top:208.00px;font-size:12.40px;font-family:'Liberation Sans',sans-serif;color:#000;transform:scaleX(0.9000);transform-origin:0 0;">0.1818</div>
<div class="a" style="left:1430px;top:201px;width:341px;height:25px;background:#fff;border-right:1px solid #b4b4b4;border-bottom:1px solid #c4c4c4"></div>
<div class="t" style="left:1735.30px;top:208.00px;font-size:12.40px;font-family:'Liberation Sans',sans-serif;color:#000;transform:scaleX(0.9000);transform-origin:0 0;">0.1466</div>
<div class="a" style="left:10px;top:226px;width:54px;height:25px;background:#f0f0f0;border-right:1px solid #6a6a6a;border-bottom:1px solid #6a6a6a"></div>
<div class="t" style="left:34.24px;top:232.00px;font-size:12.00px;font-family:'Liberation Sans',sans-serif;color:#000;font-weight:bold;transform:scaleX(0.9700);transform-origin:0 0;">y</div>
<div class="a" style="left:64px;top:226px;width:342px;height:25px;background:#fff;border-right:1px solid #b4b4b4;border-bottom:1px solid #c4c4c4"></div>
<div class="t" style="left:370.35px;top:233.00px;font-size:12.40px;font-family:'Liberation Sans',sans-serif;color:#000;transform:scaleX(0.9000);transform-origin:0 0;">0.3167</div>
<div class="a" style="left:406px;top:226px;width:342px;height:25px;background:#fff;border-right:1px solid #b4b4b4;border-bottom:1px solid #c4c4c4"></div>
<div class="t" style="left:712.13px;top:233.00px;font-size:12.40px;font-family:'Liberation Sans',sans-serif;color:#000;transform:scaleX(0.9000);transform-origin:0 0;">0.2474</div>
<div class="a" style="left:748px;top:226px;width:341px;height:25px;background:#fff;border-right:1px solid #b4b4b4;border-bottom:1px solid #c4c4c4"></div>
<div class="t" style="left:1053.35px;top:233.00px;font-size:12.40px;font-family:'Liberation Sans',sans-serif;color:#000;transform:scaleX(0.9000);transform-origin:0 0;">0.1801</div>
<div class="a" style="left:1089px;top:226px;width:341px;height:25px;background:#fff;border-right:1px solid #b4b4b4;border-bottom:1px solid #c4c4c4"></div>
<div class="t" style="left:1395.19px;top:233.00px;font-size:12.40px;font-family:'Liberation Sans',sans-serif;color:#000;transform:scaleX(0.9000);transform-origin:0 0;">0.1139</div>
<div class="a" style="left:1430px;top:226px;width:341px;height:25px;background:#fff;border-right:1px solid #b4b4b4;border-bottom:1px solid #c4c4c4"></div>
<div class="t" style="left:1735.30px;top:233.00px;font-size:12.40px;font-family:'Liberation Sans',sans-serif;color:#000;transform:scaleX(0.9000);transform-origin:0 0;">0.0558</div>
<div class="a" style="left:10px;top:251px;width:54px;height:25px;background:#f0f0f0;border-right:1px solid #6a6a6a;border-bottom:1px solid #6a6a6a"></div>
<div class="t" style="left:33.60px;top:257.00px;font-size:12.00px;font-family:'Liberation Sans',sans-serif;color:#000;font-weight:bold;transform:scaleX(0.9700);transform-origin:0 0;">Y</div>
<div class="a" style="left:64px;top:251px;width:342px;height:25px;background:#fff;border-right:1px solid #b4b4b4;border-bottom:1px solid #c4c4c4"></div>
<div class="t" style="left:376.38px;top:258.00px;font-size:12.40px;font-family:'Liberation Sans',sans-serif;color:#000;transform:scaleX(0.9000);transform-origin:0 0;">8.744</div>
<div class="a" style="left:406px;top:251px;width:342px;height:25px;background:#fff;border-right:1px solid #b4b4b4;border-bottom:1px solid #c4c4c4"></div>
<div class="t" style="left:718.49px;top:258.00px;font-size:12.40px;font-family:'Liberation Sans',sans-serif;color:#000;transform:scaleX(0.9000);transform-origin:0 0;">8.620</div>
<div class="a" style="left:748px;top:251px;width:341px;height:25px;background:#fff;border-right:1px solid #b4b4b4;border-bottom:1px solid #c4c4c4"></div>
<div class="t" style="left:1059.55px;top:258.00px;font-size:12.40px;font-family:'Liberation Sans',sans-serif;color:#000;transform:scaleX(0.9000);transform-origin:0 0;">8.045</div>
<div class="a" style="left:1089px;top:251px;width:341px;height:25px;background:#fff;border-right:1px solid #b4b4b4;border-bottom:1px solid #c4c4c4"></div>
<div class="t" style="left:1400.55px;top:258.00px;font-size:12.40px;font-family:'Liberation Sans',sans-serif;color:#000;transform:scaleX(0.9000);transform-origin:0 0;">8.123</div>
<div class="a" style="left:1430px;top:251px;width:341px;height:25px;background:#fff;border-right:1px solid #b4b4b4;border-bottom:1px solid #c4c4c4"></div>
<div class="t" style="left:1741.60px;top:258.00px;font-size:12.40px;font-family:'Liberation Sans',sans-serif;color:#000;transform:scaleX(0.9000);transform-origin:0 0;">8.772</div>
<div class="a" style="left:10px;top:276px;width:54px;height:25px;background:#f0f0f0;border-right:1px solid #6a6a6a;border-bottom:1px solid #6a6a6a"></div>
<div class="t" style="left:17.60px;top:282.00px;font-size:12.00px;font-family:'Liberation Sans',sans-serif;color:#000;font-weight:bold;transform:scaleX(0.9700);transform-origin:0 0;">Delta E</div>
<div class="a" style="left:64px;top:276px;width:342px;height:25px;background:#ffaaaa;border-right:1px solid #b4b4b4;border-bottom:1px solid #c4c4c4"></div>
<div class="t" style="left:387.20px;top:283.00px;font-size:12.40px;font-family:'Liberation Sans',sans-serif;color:#000;font-weight:bold;">4.2</div>
<div class="a" style="left:406px;top:276px;width:342px;height:25px;background:#ffffb0;border-right:1px solid #b4b4b4;border-bottom:1px solid #c4c4c4"></div>
<div class="t" style="left:729.07px;top:283.00px;font-size:12.40px;font-family:'Liberation Sans',sans-serif;color:#000;font-weight:bold;">2.1</div>
<div class="a" style="left:748px;top:276px;width:341px;height:25px;background:#b0ffb0;border-right:1px solid #b4b4b4;border-bottom:1px solid #c4c4c4"></div>
<div class="t" style="left:1070.26px;top:283.00px;font-size:12.40px;font-family:'Liberation Sans',sans-serif;color:#000;font-weight:bold;">0.7</div>
<div class="a" style="left:1089px;top:276px;width:341px;height:25px;background:#b0ffb0;border-right:1px solid #b4b4b4;border-bottom:1px solid #c4c4c4"></div>
<div class="t" style="left:1411.20px;top:283.00px;font-size:12.40px;font-family:'Liberation Sans',sans-serif;color:#000;font-weight:bold;">0.9</div>
<div class="a" style="left:1430px;top:276px;width:341px;height:25px;background:#ffffb0;border-right:1px solid #b4b4b4;border-bottom:1px solid #c4c4c4"></div>
<div class="t" style="left:1752.20px;top:283.00px;font-size:12.40px;font-family:'Liberation Sans',sans-serif;color:#000;font-weight:bold;">2.2</div>
<div class="a" style="left:10px;top:301px;width:54px;height:25px;background:#f0f0f0;border-right:1px solid #6a6a6a;border-bottom:1px solid #6a6a6a"></div>
<div class="t" style="left:15.59px;top:307.00px;font-size:12.00px;font-family:'Liberation Sans',sans-serif;color:#000;font-weight:bold;transform:scaleX(0.9700);transform-origin:0 0;">delta xy</div>
<div class="a" style="left:64px;top:301px;width:342px;height:25px;background:#f0f0f0;border-right:1px solid #b4b4b4;border-bottom:1px solid #c4c4c4"></div>
<div class="t" style="left:370.13px;top:308.00px;font-size:12.40px;font-family:'Liberation Sans',sans-serif;color:#000;transform:scaleX(0.9000);transform-origin:0 0;">0.0124</div>
<div class="a" style="left:406px;top:301px;width:342px;height:25px;background:#f0f0f0;border-right:1px solid #b4b4b4;border-bottom:1px solid #c4c4c4"></div>
<div class="t" style="left:712.35px;top:308.00px;font-size:12.40px;font-family:'Liberation Sans',sans-serif;color:#000;transform:scaleX(0.9000);transform-origin:0 0;">0.0077</div>
<div class="a" style="left:748px;top:301px;width:341px;height:25px;background:#f0f0f0;border-right:1px solid #b4b4b4;border-bottom:1px solid #c4c4c4"></div>
<div class="t" style="left:1053.35px;top:308.00px;font-size:12.40px;font-family:'Liberation Sans',sans-serif;color:#000;transform:scaleX(0.9000);transform-origin:0 0;">0.0039</div>
<div class="a" style="left:1089px;top:301px;width:341px;height:25px;background:#f0f0f0;border-right:1px solid #b4b4b4;border-bottom:1px solid #c4c4c4"></div>
<div class="t" style="left:1394.24px;top:308.00px;font-size:12.40px;font-family:'Liberation Sans',sans-serif;color:#000;transform:scaleX(0.9000);transform-origin:0 0;">0.0050</div>
<div class="a" style="left:1430px;top:301px;width:341px;height:25px;background:#f0f0f0;border-right:1px solid #b4b4b4;border-bottom:1px solid #c4c4c4"></div>
<div class="t" style="left:1735.13px;top:308.00px;font-size:12.40px;font-family:'Liberation Sans',sans-serif;color:#000;transform:scaleX(0.9000);transform-origin:0 0;">0.0054</div>
<div class="a" style="left:10px;top:326px;width:54px;height:25px;background:#f0f0f0;border-right:1px solid #6a6a6a;border-bottom:1px solid #6a6a6a"></div>
<div class="t" style="left:18.67px;top:332.00px;font-size:12.00px;font-family:'Liberation Sans',sans-serif;color:#000;font-weight:bold;transform:scaleX(0.9700);transform-origin:0 0;">delta L</div>
<div class="a" style="left:64px;top:326px;width:342px;height:25px;background:#e0e0e0;border-right:1px solid #b4b4b4;border-bottom:1px solid #c4c4c4"></div>
<div class="t" style="left:369.35px;top:333.00px;font-size:12.40px;font-family:'Liberation Sans',sans-serif;color:#000;transform:scaleX(0.9000);transform-origin:0 0;">+3.8 %</div>
<div class="a" style="left:406px;top:326px;width:342px;height:25px;background:#e0e0e0;border-right:1px solid #b4b4b4;border-bottom:1px solid #c4c4c4"></div>
<div class="t" style="left:711.35px;top:333.00px;font-size:12.40px;font-family:'Liberation Sans',sans-serif;color:#000;transform:scaleX(0.9000);transform-origin:0 0;">+2.9 %</div>
<div class="a" style="left:748px;top:326px;width:341px;height:25px;background:#e0e0e0;border-right:1px solid #b4b4b4;border-bottom:1px solid #c4c4c4"></div>
<div class="t" style="left:1055.14px;top:333.00px;font-size:12.40px;font-family:'Liberation Sans',sans-serif;color:#000;transform:scaleX(0.9000);transform-origin:0 0;">-5.2 %</div>
<div class="a" style="left:1089px;top:326px;width:341px;height:25px;background:#e0e0e0;border-right:1px solid #b4b4b4;border-bottom:1px solid #c4c4c4"></div>
<div class="t" style="left:1396.14px;top:333.00px;font-size:12.40px;font-family:'Liberation Sans',sans-serif;color:#000;transform:scaleX(0.9000);transform-origin:0 0;">-7.1 %</div>
<div class="a" style="left:1430px;top:326px;width:341px;height:25px;background:#e0e0e0;border-right:1px solid #b4b4b4;border-bottom:1px solid #c4c4c4"></div>
<div class="t" style="left:1730.94px;top:333.00px;font-size:12.40px;font-family:'Liberation Sans',sans-serif;color:#000;transform:scaleX(0.9000);transform-origin:0 0;">-16.0 %</div>
<div class="a" style="left:63px;top:351px;width:1px;height:4px;background:#6a6a6a"></div>
<div class="a" style="left:405px;top:351px;width:1px;height:4px;background:#b4b4b4"></div>
<div class="a" style="left:747px;top:351px;width:1px;height:4px;background:#b4b4b4"></div>
<div class="a" style="left:1088px;top:351px;width:1px;height:4px;background:#b4b4b4"></div>
<div class="a" style="left:1429px;top:351px;width:1px;height:4px;background:#b4b4b4"></div>
<div class="a" style="left:1770px;top:351px;width:1px;height:4px;background:#b4b4b4"></div>
<div class="a" style="left:10px;top:356px;width:1761px;height:17px;background:#f0f0f0"></div>
<svg class="a" style="left:15px;top:360px" width="6" height="9"><path d="M6 0V9L0 4.5Z" fill="#a3a3a3"/></svg>
<svg class="a" style="left:1760px;top:360px" width="6" height="9"><path d="M0 0V9L6 4.5Z" fill="#a3a3a3"/></svg>
<div class="a" style="left:1771px;top:178px;width:18px;height:195px;background:#f0f0f0"></div>
<div class="a" style="left:1779px;top:195px;width:2px;height:141px;background:#6e6e6e"></div>
<div class="a" style="left:1789px;top:178px;width:1px;height:196px;background:#fff"></div>
<div class="a" style="left:1809px;top:159px;width:91px;height:225px;background:#898989"></div>
<div class="a" style="left:1812px;top:159px;width:84px;height:105px;background:#fbfbfb"></div>
<div class="pane" style="left:1815px;top:162px;width:79px;height:99px;border-width:2px;border-color:#7a7a7a;background:linear-gradient(#7c7c7c 0 6px,#ebebeb 6px)"></div>
<div class="hdr" style="left:1817px;top:164px;width:75px;height:17px;border-radius:4px 4px 0 0"></div>
<div class="t" style="left:1822.13px;top:167.00px;font-size:11.00px;font-family:'Liberation Sans',sans-serif;color:#3c3c3c;font-weight:bold;transform:scaleX(1.2191);transform-origin:0 0;">Display</div>
<div class="a" style="left:1822px;top:180px;width:12px;height:12px;border-radius:50%;background:#f0f0f0;border:1px solid #9a9a9a;border-right-color:#e8e8e8;border-bottom-color:#e8e8e8"></div>
<div class="t" style="left:1841.17px;top:182.00px;font-size:12.00px;font-family:'Liberation Sans',sans-serif;color:#a0a0a0;transform:scaleX(1.1576);transform-origin:0 0;">Sensor</div>
<div class="a" style="left:1822px;top:196px;width:12px;height:12px;border-radius:50%;background:#fff;border:1px solid #555;border-right-color:#e8e8e8;border-bottom-color:#e8e8e8"></div>
<div class="t" style="left:1840.88px;top:198.00px;font-size:12.00px;font-family:'Liberation Sans',sans-serif;color:#000;transform:scaleX(0.9582);transform-origin:0 0;">RGB</div>
<div class="a" style="left:1822px;top:212px;width:12px;height:12px;border-radius:50%;background:#fff;border:1px solid #555;border-right-color:#e8e8e8;border-bottom-color:#e8e8e8"></div>
<div class="t" style="left:1841.57px;top:214.00px;font-size:12.00px;font-family:'Liberation Sans',sans-serif;color:#000;transform:scaleX(0.9587);transform-origin:0 0;">XYZ</div>
<div class="a" style="left:1822px;top:228px;width:12px;height:12px;border-radius:50%;background:#fff;border:1px solid #555;border-right-color:#e8e8e8;border-bottom-color:#e8e8e8"></div>
<div class="t" style="left:1841.66px;top:230.00px;font-size:12.00px;font-family:'Liberation Sans',sans-serif;color:#000;transform:scaleX(1.1419);transform-origin:0 0;">xyz</div>
<div class="a" style="left:1822px;top:244px;width:12px;height:12px;border-radius:50%;background:#fff;border:1px solid #555;border-right-color:#e8e8e8;border-bottom-color:#e8e8e8"></div>
<div class="a" style="left:1826px;top:248px;width:4px;height:4px;border-radius:50%;background:#000"></div>
<div class="t" style="left:1841.68px;top:246.00px;font-size:12.00px;font-family:'Liberation Sans',sans-serif;color:#000;transform:scaleX(1.0296);transform-origin:0 0;">xyY</div>
<div class="a" style="left:1815px;top:264px;width:79px;height:30px;background:#ececec;border:1px solid;border-color:#fff #6e6e6e #6e6e6e #fff"></div>
<div class="a" style="left:1815px;top:294px;width:79px;height:30px;background:#ececec;border:1px solid;border-color:#fff #6e6e6e #6e6e6e #fff"></div>
<div class="a" style="left:1815px;top:324px;width:79px;height:30px;background:#ececec;border:1px solid;border-color:#fff #6e6e6e #6e6e6e #fff"></div>
<div class="t" style="left:1862.35px;top:275.00px;font-size:12.00px;font-family:'Liberation Sans',sans-serif;color:#000;transform:scaleX(1.0910);transform-origin:0 0;">Go</div>
<div class="t" style="left:1849.83px;top:304.00px;font-size:12.00px;font-family:'Liberation Sans',sans-serif;color:#000;transform:scaleX(1.2184);transform-origin:0 0;">Delete</div>
<div class="t" style="left:1856.91px;top:334.00px;font-size:12.00px;font-family:'Liberation Sans',sans-serif;color:#000;transform:scaleX(1.1340);transform-origin:0 0;">Refs</div>
<svg class="a" style="left:1818px;top:267px" width="33" height="27"><path d="M1 1H9V5Q5 5 5 8Q5 11 9 11V14Q5 14 5 17Q5 20 9 20V25H1Z" fill="#b4b4b4" stroke="#222" stroke-width="0.8"/><path d="M0.8 1V25" stroke="#111" stroke-width="1.6" stroke-dasharray="1.5 1"/><path d="M23 3H31V26H23V22Q27 22 27 19Q27 16 23 16V13Q27 13 27 10Q27 7 23 7Z" fill="#b4b4b4" stroke="#222" stroke-width="0.8"/><path d="M31.2 3V26" stroke="#111" stroke-width="1.6" stroke-dasharray="1.5 1"/><path d="M7 0L22 0L19 9L31 20L29 27L16 27L10 15Z" fill="#1a2a9a"/><path d="M10 2L19.5 2L17.5 8L12.5 9Z" fill="#4a9af8"/><path d="M13.5 11L18.5 10L26 17L20.5 20Z" fill="#3a80f0"/><path d="M21.5 21.5L27.5 19.5L28 25L18 25Z" fill="#60c0ff"/></svg>
<svg class="a" style="left:1819px;top:296px" width="29" height="27"><defs><linearGradient id="bin" x1="0" y1="0" x2="1" y2="0"><stop offset="0" stop-color="#d8f0ff"/><stop offset="0.5" stop-color="#8ec8f0"/><stop offset="1" stop-color="#4a90d0"/></linearGradient></defs><path d="M1 3Q14 -1 28 1L25 21Q24 25 12 26Q6 26 5 23Z" fill="url(#bin)" stroke="#6aa8d8" stroke-width="0.8"/><path d="M3 4Q15 1 26 2Q20 5 3 4Z" fill="#5aa0e0"/><ellipse cx="14" cy="22" rx="8" ry="3" fill="#e8f6ff" opacity="0.7"/><path d="M14 13A5 5 0 0 1 22 9L23 6L24 12L18 12L20.5 10.5A3.5 3.5 0 0 0 16 13Z" fill="#20a020"/><path d="M22 14A5 5 0 0 1 14 19L13 22L12 16L18 16L15.5 17.5A3.5 3.5 0 0 0 20 14Z" fill="#20a020"/></svg>
<svg class="a" style="left:1818px;top:328px" width="33" height="24"><path d="M0 23V12L4 10L6 5L8 2L10 6L11 8L13 10L15 11L16 9L18 6L20 3L22 1L26 3L27 7L28 8L30 10L32 11L33 12V23Z" fill="#ff0" /><rect x="0.5" y="13" width="2" height="10" fill="#000080"/><rect x="2.5" y="11" width="2" height="12" fill="#f0f"/><path d="M4.5 23V7L6.5 3.5L8.5 7V23Z" fill="#0000ff"/><path d="M8.5 23V8L10 7.5L11.5 9V23Z" fill="#0ff"/><path d="M11.5 23V10L13.5 9.5L15 11V23Z" fill="#0f0"/><path d="M15 23V5L18 2L21 3V23Z" fill="#ff0"/><path d="M21 23V4L23 6L25 11V23Z" fill="#800000"/><path d="M25 23V12L27 10L29 12H32V23Z" fill="#f00"/></svg>
<div class="a" style="left:1818px;top:357px;width:56px;height:19px;background:#f0f0f0"></div>
<div class="a" style="left:1818px;top:360px;width:13px;height:13px;border-style:solid;border-width:2px 1px 1px 2px;border-color:#6a6a6a #e4e4e4 #e4e4e4 #6a6a6a;background:#fff"></div>
<div class="t" style="left:1835.83px;top:361.00px;font-size:12.00px;font-family:'Liberation Sans',sans-serif;color:#000;transform:scaleX(1.2195);transform-origin:0 0;">Edit</div>
<div class="a" style="left:2px;top:377px;width:1807px;height:3px;background:#fbfbfb"></div>
<div class="a" style="left:2px;top:380px;width:1894px;height:4px;background:#7a7a7a"></div>
<div class="a" style="left:2px;top:384px;width:1894px;height:3px;background:#fbfbfb"></div>
<div class="a" style="left:383px;top:387px;width:1px;height:628px;background:#fbfbfb"></div>
<div class="a" style="left:384px;top:380px;width:4px;height:642px;background:#7a7a7a"></div>
<div class="a" style="left:388px;top:387px;width:3px;height:628px;background:#fbfbfb"></div>
<div class="a" style="left:2px;top:1015px;width:1894px;height:2px;background:#fbfbfb"></div>
<div class="a" style="left:2px;top:1017px;width:1899px;height:5px;background:linear-gradient(#6e6e6e 0 2px,#b0b0b0 2px)"></div>
<div class="a" style="left:0px;top:1022px;width:1920px;height:20px;background:#f0f0f0"></div>
<div class="a" style="left:19px;top:1030px;width:1824px;height:2px;background:#8a8a8a"></div>
<div class="pane" style="left:5px;top:387px;width:378px;height:628px;;background:linear-gradient(#7c7c7c 0 6px,#ebebeb 6px)"></div>
<div class="hdr" style="left:6px;top:388px;width:376px;height:18px"></div>
<div class="t" style="left:11.66px;top:391.00px;font-size:11.00px;font-family:'Liberation Sans',sans-serif;color:#3c3c3c;font-weight:bold;transform:scaleX(1.2375);transform-origin:0 0;">Selected color</div>
<div class="a" style="left:17px;top:409px;width:110px;height:16px;background:#efefef"></div>
<div class="t" style="left:17.26px;top:411.00px;font-size:12.00px;font-family:'Liberation Sans',sans-serif;color:#000;transform:scaleX(1.0808);transform-origin:0 0;">RGB Levels</div>
<div class="a" style="left:230px;top:406px;width:127px;height:17px;background:#efefef"></div>
<div class="t" style="left:240.99px;top:409.00px;font-size:12.00px;font-family:'Liberation Sans',sans-serif;color:#000;transform:scaleX(1.1752);transform-origin:0 0;">Current Measure</div>
<div class="a" style="left:14px;top:433px;width:200px;height:86px;background:#efefef"></div>
<div class="a" style="left:14px;top:477px;width:200px;height:1px;background:repeating-linear-gradient(90deg,#7a7a7a 0 3px,transparent 3px 6px)"></div>
<svg class="a" style="left:14px;top:496px" width="200" height="24"><path d="M0 18L4 15.5L9 14L16 13H35 L42 14L46 15.5L49 18Z" fill="#000" stroke="#fff" stroke-width="0.6" stroke-linejoin="round"/><path d="M4 18L8 16L16 14.5H35 L43 16L47 18Z" fill="#a00000"/><path d="M51 18L55 15.5L60 14L67 13H86 L93 14L97 15.5L100 18Z" fill="#000" stroke="#fff" stroke-width="0.6" stroke-linejoin="round"/><path d="M55 18L59 16L67 14.5H86 L94 16L98 18Z" fill="#009900"/><path d="M102 18L106 15.5L111 14L118 13H137 L144 14L148 15.5L151 18Z" fill="#000" stroke="#fff" stroke-width="0.6" stroke-linejoin="round"/><path d="M106 18L110 16L118 14.5H137 L145 16L149 18Z" fill="#0000a8"/><path d="M153 18L157 15.5L162 14L169 13H188 L195 14L199 15.5L202 18Z" fill="#000" stroke="#fff" stroke-width="0.6" stroke-linejoin="round"/><path d="M157 18L161 16L169 14.5H188 L196 16L200 18Z" fill="#c88a10"/><rect x="0" y="18" width="200" height="5" fill="#000"/></svg>
<div class="t" style="left:25.99px;top:496.00px;font-size:12.00px;font-family:'Liberation Serif',serif;color:#111;">0.0%</div>
<div class="t" style="left:76.99px;top:496.00px;font-size:12.00px;font-family:'Liberation Serif',serif;color:#111;">0.0%</div>
<div class="t" style="left:127.99px;top:496.00px;font-size:12.00px;font-family:'Liberation Serif',serif;color:#111;">0.0%</div>
<div class="t" style="left:176.34px;top:496.00px;font-size:12.00px;font-family:'Liberation Serif',serif;color:#111;">dE 0.0</div>
<div class="a" style="left:16px;top:533px;width:192px;height:73px;background:#f0f0f0"></div>
<div class="t" style="left:34.38px;top:536.00px;font-size:12.00px;font-family:'Liberation Sans',sans-serif;color:#000;font-weight:bold;transform:scaleX(1.1785);transform-origin:0 0;">Measure</div>
<div class="t" style="left:126.62px;top:536.00px;font-size:12.00px;font-family:'Liberation Sans',sans-serif;color:#000;font-weight:bold;transform:scaleX(1.1340);transform-origin:0 0;">Reference</div>
<div class="a" style="left:17px;top:622px;width:48px;height:16px;background:#efefef"></div>
<div class="t" style="left:18.01px;top:623.00px;font-size:12.00px;font-family:'Liberation Sans',sans-serif;color:#000;transform:scaleX(1.1887);transform-origin:0 0;">Target</div>
<div class="a" style="left:50px;top:638px;width:116px;height:90px;border:1px solid #000;background:conic-gradient(from 0deg at 50% 50%,hsl(112,100%,50%) 0deg,hsl(60,100%,50%) 45deg,hsl(30,100%,50%) 60deg,hsl(0,100%,50%) 95deg,hsl(320,100%,50%) 130deg,hsl(275,100%,45%) 180deg,hsl(240,100%,50%) 230deg,hsl(200,100%,40%) 270deg,hsl(150,100%,50%) 310deg,hsl(112,100%,50%) 360deg)"></div>
<svg class="a" style="left:50px;top:638px" width="116" height="90"><rect x="17.5" y="13.5" width="81" height="63" rx="7" fill="#000" stroke="#fff"/><path d="M15 44.5H103M58.5 13V77" stroke="#fff" stroke-dasharray="3 3"/><ellipse cx="58.5" cy="43.5" rx="21" ry="15.5" fill="none" stroke="#fff" stroke-dasharray="3 3"/></svg>
<div class="a" style="left:220px;top:430px;width:153px;height:578px;border-left:2px solid #6a6a6a;border-top:2px solid #6a6a6a;background:#f0f0f0"></div>
<div class="a" style="left:222px;top:432px;width:53px;height:23px;background:#f0f0f0;border-right:1px solid #6a6a6a;border-bottom:1px solid #6a6a6a"></div>
<div class="t" style="left:226.96px;top:438.00px;font-size:12.00px;font-family:'Liberation Sans',sans-serif;color:#000;font-weight:bold;">Y cd/m&sup2;</div>
<div class="a" style="left:275px;top:432px;width:79px;height:23px;background:#fff;border-bottom:1px solid #c4c4c4;border-right:1px solid #c4c4c4"></div>
<div class="a" style="left:222px;top:455px;width:53px;height:23px;background:#f0f0f0;border-right:1px solid #6a6a6a;border-bottom:1px solid #6a6a6a"></div>
<div class="t" style="left:235.33px;top:461.00px;font-size:12.00px;font-family:'Liberation Sans',sans-serif;color:#000;font-weight:bold;">Y ftL</div>
<div class="a" style="left:275px;top:455px;width:79px;height:23px;background:#fff;border-bottom:1px solid #c4c4c4;border-right:1px solid #c4c4c4"></div>
<div class="a" style="left:222px;top:478px;width:53px;height:23px;background:#f0f0f0;border-right:1px solid #6a6a6a;border-bottom:1px solid #6a6a6a"></div>
<div class="t" style="left:242.62px;top:484.00px;font-size:12.00px;font-family:'Liberation Sans',sans-serif;color:#000;font-weight:bold;">T&deg;</div>
<div class="a" style="left:275px;top:478px;width:79px;height:23px;background:#fff;border-bottom:1px solid #c4c4c4;border-right:1px solid #c4c4c4"></div>
<div class="a" style="left:222px;top:501px;width:53px;height:23px;background:#f0f0f0;border-right:1px solid #6a6a6a;border-bottom:1px solid #6a6a6a"></div>
<div class="t" style="left:244.51px;top:507.00px;font-size:12.00px;font-family:'Liberation Sans',sans-serif;color:#000;font-weight:bold;">X</div>
<div class="a" style="left:275px;top:501px;width:79px;height:23px;background:#e0e0e0;border-bottom:1px solid #c4c4c4;border-right:1px solid #c4c4c4"></div>
<div class="a" style="left:222px;top:524px;width:53px;height:23px;background:#f0f0f0;border-right:1px solid #6a6a6a;border-bottom:1px solid #6a6a6a"></div>
<div class="t" style="left:244.48px;top:530.00px;font-size:12.00px;font-family:'Liberation Sans',sans-serif;color:#000;font-weight:bold;">Y</div>
<div class="a" style="left:275px;top:524px;width:79px;height:23px;background:#e0e0e0;border-bottom:1px solid #c4c4c4;border-right:1px solid #c4c4c4"></div>
<div class="a" style="left:222px;top:547px;width:53px;height:23px;background:#f0f0f0;border-right:1px solid #6a6a6a;border-bottom:1px solid #6a6a6a"></div>
<div class="t" style="left:244.84px;top:553.00px;font-size:12.00px;font-family:'Liberation Sans',sans-serif;color:#000;font-weight:bold;">Z</div>
<div class="a" style="left:275px;top:547px;width:79px;height:23px;background:#e0e0e0;border-bottom:1px solid #c4c4c4;border-right:1px solid #c4c4c4"></div>
<div class="a" style="left:222px;top:570px;width:53px;height:23px;background:#f0f0f0;border-right:1px solid #6a6a6a;border-bottom:1px solid #6a6a6a"></div>
<div class="t" style="left:243.88px;top:576.00px;font-size:12.00px;font-family:'Liberation Sans',sans-serif;color:#000;font-weight:bold;">R</div>
<div class="a" style="left:275px;top:570px;width:79px;height:23px;background:#fff;border-bottom:1px solid #c4c4c4;border-right:1px solid #c4c4c4"></div>
<div class="a" style="left:222px;top:593px;width:53px;height:23px;background:#f0f0f0;border-right:1px solid #6a6a6a;border-bottom:1px solid #6a6a6a"></div>
<div class="t" style="left:243.94px;top:599.00px;font-size:12.00px;font-family:'Liberation Sans',sans-serif;color:#000;font-weight:bold;">G</div>
<div class="a" style="left:275px;top:593px;width:79px;height:23px;background:#fff;border-bottom:1px solid #c4c4c4;border-right:1px solid #c4c4c4"></div>
<div class="a" style="left:222px;top:616px;width:53px;height:23px;background:#f0f0f0;border-right:1px solid #6a6a6a;border-bottom:1px solid #6a6a6a"></div>
<div class="t" style="left:244.03px;top:622.00px;font-size:12.00px;font-family:'Liberation Sans',sans-serif;color:#000;font-weight:bold;">B</div>
<div class="a" style="left:275px;top:616px;width:79px;height:23px;background:#fff;border-bottom:1px solid #c4c4c4;border-right:1px solid #c4c4c4"></div>
<div class="a" style="left:222px;top:639px;width:53px;height:23px;background:#f0f0f0;border-right:1px solid #6a6a6a;border-bottom:1px solid #6a6a6a"></div>
<div class="t" style="left:245.17px;top:645.00px;font-size:12.00px;font-family:'Liberation Sans',sans-serif;color:#000;font-weight:bold;">x</div>
<div class="a" style="left:275px;top:639px;width:79px;height:23px;background:#e0e0e0;border-bottom:1px solid #c4c4c4;border-right:1px solid #c4c4c4"></div>
<div class="a" style="left:222px;top:662px;width:53px;height:23px;background:#f0f0f0;border-right:1px solid #6a6a6a;border-bottom:1px solid #6a6a6a"></div>
<div class="t" style="left:245.14px;top:668.00px;font-size:12.00px;font-family:'Liberation Sans',sans-serif;color:#000;font-weight:bold;">y</div>
<div class="a" style="left:275px;top:662px;width:79px;height:23px;background:#e0e0e0;border-bottom:1px solid #c4c4c4;border-right:1px solid #c4c4c4"></div>
<div class="a" style="left:222px;top:685px;width:53px;height:23px;background:#f0f0f0;border-right:1px solid #6a6a6a;border-bottom:1px solid #6a6a6a"></div>
<div class="t" style="left:244.48px;top:691.00px;font-size:12.00px;font-family:'Liberation Sans',sans-serif;color:#000;font-weight:bold;">Y</div>
<div class="a" style="left:275px;top:685px;width:79px;height:23px;background:#e0e0e0;border-bottom:1px solid #c4c4c4;border-right:1px solid #c4c4c4"></div>
<div class="a" style="left:222px;top:708px;width:53px;height:23px;background:#f0f0f0;border-right:1px solid #6a6a6a;border-bottom:1px solid #6a6a6a"></div>
<div class="t" style="left:245.17px;top:714.00px;font-size:12.00px;font-family:'Liberation Sans',sans-serif;color:#000;font-weight:bold;">x</div>
<div class="a" style="left:275px;top:708px;width:79px;height:23px;background:#fff;border-bottom:1px solid #c4c4c4;border-right:1px solid #c4c4c4"></div>
<div class="a" style="left:222px;top:731px;width:53px;height:23px;background:#f0f0f0;border-right:1px solid #6a6a6a;border-bottom:1px solid #6a6a6a"></div>
<div class="t" style="left:245.14px;top:737.00px;font-size:12.00px;font-family:'Liberation Sans',sans-serif;color:#000;font-weight:bold;">y</div>
<div class="a" style="left:275px;top:731px;width:79px;height:23px;background:#fff;border-bottom:1px solid #c4c4c4;border-right:1px solid #c4c4c4"></div>
<div class="a" style="left:222px;top:754px;width:53px;height:23px;background:#f0f0f0;border-right:1px solid #6a6a6a;border-bottom:1px solid #6a6a6a"></div>
<div class="t" style="left:245.47px;top:760.00px;font-size:12.00px;font-family:'Liberation Sans',sans-serif;color:#000;font-weight:bold;">z</div>
<div class="a" style="left:275px;top:754px;width:79px;height:23px;background:#fff;border-bottom:1px solid #c4c4c4;border-right:1px solid #c4c4c4"></div>
<div class="a" style="left:222px;top:777px;width:53px;height:23px;background:#f0f0f0;border-right:1px solid #6a6a6a;border-bottom:1px solid #6a6a6a"></div>
<div class="t" style="left:244.60px;top:783.00px;font-size:12.00px;font-family:'Liberation Sans',sans-serif;color:#000;font-weight:bold;">L</div>
<div class="a" style="left:275px;top:777px;width:79px;height:23px;background:#e0e0e0;border-bottom:1px solid #c4c4c4;border-right:1px solid #c4c4c4"></div>
<div class="a" style="left:222px;top:800px;width:53px;height:23px;background:#f0f0f0;border-right:1px solid #6a6a6a;border-bottom:1px solid #6a6a6a"></div>
<div class="t" style="left:244.96px;top:806.00px;font-size:12.00px;font-family:'Liberation Sans',sans-serif;color:#000;font-weight:bold;">a</div>
<div class="a" style="left:275px;top:800px;width:79px;height:23px;background:#e0e0e0;border-bottom:1px solid #c4c4c4;border-right:1px solid #c4c4c4"></div>
<div class="a" style="left:222px;top:823px;width:53px;height:23px;background:#f0f0f0;border-right:1px solid #6a6a6a;border-bottom:1px solid #6a6a6a"></div>
<div class="t" style="left:244.69px;top:829.00px;font-size:12.00px;font-family:'Liberation Sans',sans-serif;color:#000;font-weight:bold;">b</div>
<div class="a" style="left:275px;top:823px;width:79px;height:23px;background:#e0e0e0;border-bottom:1px solid #c4c4c4;border-right:1px solid #c4c4c4"></div>
<div class="a" style="left:222px;top:846px;width:53px;height:23px;background:#f0f0f0;border-right:1px solid #6a6a6a;border-bottom:1px solid #6a6a6a"></div>
<div class="t" style="left:244.60px;top:852.00px;font-size:12.00px;font-family:'Liberation Sans',sans-serif;color:#000;font-weight:bold;">L</div>
<div class="a" style="left:275px;top:846px;width:79px;height:23px;background:#fff;border-bottom:1px solid #c4c4c4;border-right:1px solid #c4c4c4"></div>
<div class="a" style="left:222px;top:869px;width:53px;height:23px;background:#f0f0f0;border-right:1px solid #6a6a6a;border-bottom:1px solid #6a6a6a"></div>
<div class="t" style="left:244.09px;top:875.00px;font-size:12.00px;font-family:'Liberation Sans',sans-serif;color:#000;font-weight:bold;">C</div>
<div class="a" style="left:275px;top:869px;width:79px;height:23px;background:#fff;border-bottom:1px solid #c4c4c4;border-right:1px solid #c4c4c4"></div>
<div class="a" style="left:222px;top:892px;width:53px;height:23px;background:#f0f0f0;border-right:1px solid #6a6a6a;border-bottom:1px solid #6a6a6a"></div>
<div class="t" style="left:244.18px;top:898.00px;font-size:12.00px;font-family:'Liberation Sans',sans-serif;color:#000;font-weight:bold;">H</div>
<div class="a" style="left:275px;top:892px;width:79px;height:23px;background:#fff;border-bottom:1px solid #c4c4c4;border-right:1px solid #c4c4c4"></div>
<div class="a" style="left:222px;top:915px;width:53px;height:23px;background:#f0f0f0;border-right:1px solid #6a6a6a;border-bottom:1px solid #6a6a6a"></div>
<div class="t" style="left:244.60px;top:921.00px;font-size:12.00px;font-family:'Liberation Sans',sans-serif;color:#000;font-weight:bold;">L</div>
<div class="a" style="left:275px;top:915px;width:79px;height:23px;background:#e0e0e0;border-bottom:1px solid #c4c4c4;border-right:1px solid #c4c4c4"></div>
<div class="a" style="left:222px;top:938px;width:53px;height:23px;background:#f0f0f0;border-right:1px solid #6a6a6a;border-bottom:1px solid #6a6a6a"></div>
<div class="t" style="left:243.49px;top:944.00px;font-size:12.00px;font-family:'Liberation Sans',sans-serif;color:#000;font-weight:bold;">M</div>
<div class="a" style="left:275px;top:938px;width:79px;height:23px;background:#e0e0e0;border-bottom:1px solid #c4c4c4;border-right:1px solid #c4c4c4"></div>
<div class="a" style="left:222px;top:961px;width:53px;height:23px;background:#f0f0f0;border-right:1px solid #6a6a6a;border-bottom:1px solid #6a6a6a"></div>
<div class="t" style="left:244.57px;top:967.00px;font-size:12.00px;font-family:'Liberation Sans',sans-serif;color:#000;font-weight:bold;">S</div>
<div class="a" style="left:275px;top:961px;width:79px;height:23px;background:#e0e0e0;border-bottom:1px solid #c4c4c4;border-right:1px solid #c4c4c4"></div>
<div class="a" style="left:222px;top:984px;width:132px;height:23px;background:#a0a0a0"></div>
<div class="a" style="left:354px;top:432px;width:19px;height:575px;background:#f0f0f0;border-right:1px solid #fff"></div>
<svg class="a" style="left:359px;top:437px" width="9" height="6"><path d="M0 6H9L4.5 0Z" fill="#a3a3a3"/></svg>
<svg class="a" style="left:359px;top:996px" width="9" height="6"><path d="M0 0H9L4.5 6Z" fill="#a3a3a3"/></svg>
<div class="pane" style="left:391px;top:387px;width:1504px;height:628px;;background:linear-gradient(#7c7c7c 0 6px,#ebebeb 6px)"></div>
<div class="hdr" style="left:392px;top:388px;width:1502px;height:18px"></div>
<div class="t" style="left:397.57px;top:392.00px;font-size:11.00px;font-family:'Liberation Sans',sans-serif;color:#3c3c3c;font-weight:bold;transform:scaleX(1.2989);transform-origin:0 0;">Information</div>
<div class="a" style="left:396px;top:409px;width:302px;height:24px;border:2px solid #7a7a7a;border-right-color:#fff;border-bottom-color:#fff;background:#fff"></div>
<div class="a" style="left:400px;top:413px;width:279px;height:16px;background:#0078d7"></div>
<div class="t" style="left:399.95px;top:416.00px;font-size:12.00px;font-family:'Liberation Sans',sans-serif;color:#fff;transform:scaleX(1.0888);transform-origin:0 0;">RGB Levels</div>
<div class="a" style="left:679px;top:411px;width:17px;height:20px;background:#f0f0f0;border:1px solid;border-color:#fff #6e6e6e #6e6e6e #fff"></div>
<svg class="a" style="left:683px;top:419px" width="8" height="5"><path d="M0 0H8L4 4.5Z" fill="#000"/></svg>
<div class="a" style="left:398px;top:439px;width:1495px;height:571px;border:2px solid #7a7a7a;border-right-color:#fbfbfb;border-bottom-color:#fbfbfb"></div>
<div class="a" style="left:400px;top:441px;width:1491px;height:567px;border:2px solid #a0a0a0;border-right-color:#e4e4e4;border-bottom-color:#e4e4e4"></div>
<svg class="a" style="left:402px;top:443px" width="1488" height="562" viewBox="402 443 1488 562">
<defs><linearGradient id="bg" x1="0" y1="0" x2="1" y2="0"><stop offset="0" stop-color="#1f1f1f"/><stop offset="1" stop-color="#fbfbfb"/></linearGradient><clipPath id="cp"><rect x="402" y="443" width="1488" height="562"/></clipPath></defs>
<rect x="402" y="443" width="1488" height="562" fill="url(#bg)"/>
<text x="403.68" y="467" font-family="Liberation Serif" font-size="13.2" fill="#e6e6e6">140%</text><text x="403.68" y="495" font-family="Liberation Serif" font-size="13.2" fill="#e6e6e6">130%</text><text x="403.68" y="523" font-family="Liberation Serif" font-size="13.2" fill="#e6e6e6">120%</text><text x="403.68" y="551" font-family="Liberation Serif" font-size="13.2" fill="#e6e6e6">110%</text><text x="403.68" y="579" font-family="Liberation Serif" font-size="13.2" fill="#e6e6e6">100%</text><text x="404.40" y="607" font-family="Liberation Serif" font-size="13.2" fill="#e6e6e6">90%</text><text x="404.34" y="635" font-family="Liberation Serif" font-size="13.2" fill="#e6e6e6">80%</text><text x="403.94" y="663" font-family="Liberation Serif" font-size="13.2" fill="#e6e6e6">70%</text><text x="404.27" y="691" font-family="Liberation Serif" font-size="13.2" fill="#e6e6e6">60%</text><text x="404.04" y="776" font-family="Liberation Serif" font-size="13.2" fill="#e6e6e6">8</text><text x="403.97" y="832" font-family="Liberation Serif" font-size="13.2" fill="#e6e6e6">6</text><text x="404.30" y="888" font-family="Liberation Serif" font-size="13.2" fill="#e6e6e6">4</text><text x="403.97" y="944" font-family="Liberation Serif" font-size="13.2" fill="#e6e6e6">2</text><text x="551.68" y="720" font-family="Liberation Serif" font-size="13.2" fill="#f4f4f4">10% White</text><text x="551.68" y="1001" font-family="Liberation Serif" font-size="13.2" fill="#f4f4f4">10% White</text><text x="701.27" y="720" font-family="Liberation Serif" font-size="13.2" fill="#e0e0e0">20% White</text><text x="701.27" y="1001" font-family="Liberation Serif" font-size="13.2" fill="#e0e0e0">20% White</text><text x="850.21" y="720" font-family="Liberation Serif" font-size="13.2" fill="#c8c8c8">30% White</text><text x="850.21" y="1001" font-family="Liberation Serif" font-size="13.2" fill="#c8c8c8">30% White</text><text x="999.60" y="720" font-family="Liberation Serif" font-size="13.2" fill="#a8a8a8">40% White</text><text x="999.60" y="1001" font-family="Liberation Serif" font-size="13.2" fill="#a8a8a8">40% White</text><text x="1148.07" y="720" font-family="Liberation Serif" font-size="13.2" fill="#8a8a8a">50% White</text><text x="1148.07" y="1001" font-family="Liberation Serif" font-size="13.2" fill="#8a8a8a">50% White</text><text x="1296.27" y="720" font-family="Liberation Serif" font-size="13.2" fill="#7a7a7a">60% White</text><text x="1296.27" y="1001" font-family="Liberation Serif" font-size="13.2" fill="#7a7a7a">60% White</text><text x="1444.94" y="720" font-family="Liberation Serif" font-size="13.2" fill="#5a5a5a">70% White</text><text x="1444.94" y="1001" font-family="Liberation Serif" font-size="13.2" fill="#5a5a5a">70% White</text><text x="1594.34" y="720" font-family="Liberation Serif" font-size="13.2" fill="#3a3a3a">80% White</text><text x="1594.34" y="1001" font-family="Liberation Serif" font-size="13.2" fill="#3a3a3a">80% White</text><text x="1743.40" y="720" font-family="Liberation Serif" font-size="13.2" fill="#1a1a1a">90% White</text><text x="1743.40" y="1001" font-family="Liberation Serif" font-size="13.2" fill="#1a1a1a">90% White</text><text x="0" y="0" transform="translate(1055.22 456.8) scale(1.0321 1)" font-family="Liberation Sans" font-weight="bold" font-size="14" fill="#e2e200">Gray Scale Balance w/gamma</text><text x="0" y="0" transform="translate(1724.25 962.8) scale(1.0077 1)" font-family="Liberation Sans" font-weight="bold" font-size="16" fill="#a0a0a0">hcfr.sourceforge.net</text>
<path d="M550.5 443V1005M699.5 443V1005M848.5 443V1005M997.5 443V1005M1146.5 443V1005M1294.5 443V1005M1443.5 443V1005M1592.5 443V1005M1741.5 443V1005M402 471.5H1890M402 499.5H1890M402 527.5H1890M402 555.5H1890M402 583.5H1890M402 611.5H1890M402 639.5H1890M402 667.5H1890M402 695.5H1890M402 780.5H1890M402 836.5H1890M402 892.5H1890M402 948.5H1890M402.5 443V1005" stroke="#004040" stroke-width="1" fill="none"/>
<path d="M402 583.5H1890" stroke="#fff" stroke-width="1" stroke-dasharray="4 3"/>
<rect x="402" y="580" width="3" height="7" fill="#ddd"/>
<g clip-path="url(#cp)">
<polyline points="469,545 544,569 619,586 694,570 768,586 843,587 918,588 993,589 1067,586 1142,593 1217,598 1292,599 1366,599 1441,597 1516,596 1591,595 1665,594 1740,591 1815,592 1888,591" fill="none" stroke="#00ff00" stroke-width="2" stroke-linejoin="round"/><rect x="465.0" y="541.0" width="8" height="8" fill="#00ff00"/><rect x="540.0" y="565.0" width="8" height="8" fill="#00ff00"/><rect x="615.0" y="582.0" width="8" height="8" fill="#00ff00"/><rect x="690.0" y="566.0" width="8" height="8" fill="#00ff00"/><rect x="764.0" y="582.0" width="8" height="8" fill="#00ff00"/><rect x="839.0" y="583.0" width="8" height="8" fill="#00ff00"/><rect x="914.0" y="584.0" width="8" height="8" fill="#00ff00"/><rect x="989.0" y="585.0" width="8" height="8" fill="#00ff00"/><rect x="1063.0" y="582.0" width="8" height="8" fill="#00ff00"/><rect x="1138.0" y="589.0" width="8" height="8" fill="#00ff00"/><rect x="1213.0" y="594.0" width="8" height="8" fill="#00ff00"/><rect x="1288.0" y="595.0" width="8" height="8" fill="#00ff00"/><rect x="1362.0" y="595.0" width="8" height="8" fill="#00ff00"/><rect x="1437.0" y="593.0" width="8" height="8" fill="#00ff00"/><rect x="1512.0" y="592.0" width="8" height="8" fill="#00ff00"/><rect x="1587.0" y="591.0" width="8" height="8" fill="#00ff00"/><rect x="1661.0" y="590.0" width="8" height="8" fill="#00ff00"/><rect x="1736.0" y="587.0" width="8" height="8" fill="#00ff00"/><rect x="1811.0" y="588.0" width="8" height="8" fill="#00ff00"/><rect x="1884.0" y="587.0" width="8" height="8" fill="#00ff00"/>
<polyline points="469,601 544,553 619,548 694,525 768,542 843,546 918,548 993,555 1067,555 1142,561 1217,564 1292,566 1366,567 1441,565 1516,564 1591,564 1665,564 1740,561 1815,561 1888,561" fill="none" stroke="#ff0000" stroke-width="2" stroke-linejoin="round"/><rect x="465.0" y="597.0" width="8" height="8" fill="#ff0000"/><rect x="540.0" y="549.0" width="8" height="8" fill="#ff0000"/><rect x="615.0" y="544.0" width="8" height="8" fill="#ff0000"/><rect x="690.0" y="521.0" width="8" height="8" fill="#ff0000"/><rect x="764.0" y="538.0" width="8" height="8" fill="#ff0000"/><rect x="839.0" y="542.0" width="8" height="8" fill="#ff0000"/><rect x="914.0" y="544.0" width="8" height="8" fill="#ff0000"/><rect x="989.0" y="551.0" width="8" height="8" fill="#ff0000"/><rect x="1063.0" y="551.0" width="8" height="8" fill="#ff0000"/><rect x="1138.0" y="557.0" width="8" height="8" fill="#ff0000"/><rect x="1213.0" y="560.0" width="8" height="8" fill="#ff0000"/><rect x="1288.0" y="562.0" width="8" height="8" fill="#ff0000"/><rect x="1362.0" y="563.0" width="8" height="8" fill="#ff0000"/><rect x="1437.0" y="561.0" width="8" height="8" fill="#ff0000"/><rect x="1512.0" y="560.0" width="8" height="8" fill="#ff0000"/><rect x="1587.0" y="560.0" width="8" height="8" fill="#ff0000"/><rect x="1661.0" y="560.0" width="8" height="8" fill="#ff0000"/><rect x="1736.0" y="557.0" width="8" height="8" fill="#ff0000"/><rect x="1811.0" y="557.0" width="8" height="8" fill="#ff0000"/><rect x="1884.0" y="557.0" width="8" height="8" fill="#ff0000"/>
<polyline points="469,600 544,510 619,540 694,516 768,544 843,551 918,555 993,557 1067,555 1142,565 1217,569 1292,574 1366,573 1441,574 1516,573 1591,572 1665,570 1740,567 1815,568 1888,567" fill="none" stroke="#0000ff" stroke-width="2" stroke-linejoin="round"/><rect x="465.0" y="596.0" width="8" height="8" fill="#0000ff"/><rect x="540.0" y="506.0" width="8" height="8" fill="#0000ff"/><rect x="615.0" y="536.0" width="8" height="8" fill="#0000ff"/><rect x="690.0" y="512.0" width="8" height="8" fill="#0000ff"/><rect x="764.0" y="540.0" width="8" height="8" fill="#0000ff"/><rect x="839.0" y="547.0" width="8" height="8" fill="#0000ff"/><rect x="914.0" y="551.0" width="8" height="8" fill="#0000ff"/><rect x="989.0" y="553.0" width="8" height="8" fill="#0000ff"/><rect x="1063.0" y="551.0" width="8" height="8" fill="#0000ff"/><rect x="1138.0" y="561.0" width="8" height="8" fill="#0000ff"/><rect x="1213.0" y="565.0" width="8" height="8" fill="#0000ff"/><rect x="1288.0" y="570.0" width="8" height="8" fill="#0000ff"/><rect x="1362.0" y="569.0" width="8" height="8" fill="#0000ff"/><rect x="1437.0" y="570.0" width="8" height="8" fill="#0000ff"/><rect x="1512.0" y="569.0" width="8" height="8" fill="#0000ff"/><rect x="1587.0" y="568.0" width="8" height="8" fill="#0000ff"/><rect x="1661.0" y="566.0" width="8" height="8" fill="#0000ff"/><rect x="1736.0" y="563.0" width="8" height="8" fill="#0000ff"/><rect x="1811.0" y="564.0" width="8" height="8" fill="#0000ff"/><rect x="1884.0" y="563.0" width="8" height="8" fill="#0000ff"/>
<polyline points="469,997 544,972 619,927 694,898 768,892 843,885 918,879 993,878 1067,871 1142,860 1217,845 1292,848 1366,838 1441,840 1516,828 1591,823 1665,818 1740,816 1815,801 1888,791" fill="none" stroke="#ff00ff" stroke-width="2" stroke-linejoin="round"/><rect x="465.0" y="993.0" width="8" height="8" fill="#ff00ff"/><rect x="540.0" y="968.0" width="8" height="8" fill="#ff00ff"/><rect x="615.0" y="923.0" width="8" height="8" fill="#ff00ff"/><rect x="690.0" y="894.0" width="8" height="8" fill="#ff00ff"/><rect x="764.0" y="888.0" width="8" height="8" fill="#ff00ff"/><rect x="839.0" y="881.0" width="8" height="8" fill="#ff00ff"/><rect x="914.0" y="875.0" width="8" height="8" fill="#ff00ff"/><rect x="989.0" y="874.0" width="8" height="8" fill="#ff00ff"/><rect x="1063.0" y="867.0" width="8" height="8" fill="#ff00ff"/><rect x="1138.0" y="856.0" width="8" height="8" fill="#ff00ff"/><rect x="1213.0" y="841.0" width="8" height="8" fill="#ff00ff"/><rect x="1288.0" y="844.0" width="8" height="8" fill="#ff00ff"/><rect x="1362.0" y="834.0" width="8" height="8" fill="#ff00ff"/><rect x="1437.0" y="836.0" width="8" height="8" fill="#ff00ff"/><rect x="1512.0" y="824.0" width="8" height="8" fill="#ff00ff"/><rect x="1587.0" y="819.0" width="8" height="8" fill="#ff00ff"/><rect x="1661.0" y="814.0" width="8" height="8" fill="#ff00ff"/><rect x="1736.0" y="812.0" width="8" height="8" fill="#ff00ff"/><rect x="1811.0" y="797.0" width="8" height="8" fill="#ff00ff"/><rect x="1884.0" y="787.0" width="8" height="8" fill="#ff00ff"/>
</g></svg>
<div class="a" style="left:0;top:1042px;width:1920px;height:1px;background:#000"></div>
<div class="a" style="left:0;top:1043px;width:1920px;height:18px;background:#f0f0f0"></div>
<div class="a" style="left:0;top:1042px;width:54px;height:20px;background:#000"></div>
<div class="a" style="left:1px;top:1043px;width:16px;height:17px;background:#f0f0f0;border-style:solid;border-width:1px 2px 2px 1px;border-color:#fff #8a8a8a #8a8a8a #fff"></div>
<div class="a" style="left:18px;top:1043px;width:16px;height:17px;background:#f0f0f0;border-style:solid;border-width:1px 2px 2px 1px;border-color:#fff #8a8a8a #8a8a8a #fff"></div>
<div class="a" style="left:35px;top:1043px;width:17px;height:17px;background:#f0f0f0;border-style:solid;border-width:1px 2px 2px 1px;border-color:#fff #8a8a8a #8a8a8a #fff"></div>
<svg class="a" style="left:5px;top:1047px" width="9" height="9"><path d="M1 1L8 8M8 1L1 8" stroke="#000" stroke-width="1.6"/></svg>
<svg class="a" style="left:23px;top:1047px" width="5" height="9"><path d="M4.5 0.5L0.8 4.5L4.5 8.5" stroke="#000" stroke-width="1.6" fill="none"/></svg>
<svg class="a" style="left:41px;top:1047px" width="5" height="9"><path d="M0.5 0.5L4.2 4.5L0.5 8.5" stroke="#000" stroke-width="1.6" fill="none"/></svg>
<svg class="a" style="left:0px;top:1042px" width="340" height="20"><path d="M239.0 0.5L246.0 18.5H313.5L321.4 0.5" fill="#f0f0f0" fill-opacity="0" stroke="#7a7a7a"/><path d="M239.0 0.5L246.0 18.5M313.5 18.5L321.4 0.5" fill="none" stroke="#222"/><path d="M171.0 0.5L179.0 18.5H239.0L247.0 0.5" fill="#f0f0f0" fill-opacity="0" stroke="#7a7a7a"/><path d="M171.0 0.5L179.0 18.5M239.0 18.5L247.0 0.5" fill="none" stroke="#222"/><path d="M119.5 0.5L127.0 18.5H171.5L179.0 0.5" fill="#f0f0f0" fill-opacity="0" stroke="#7a7a7a"/><path d="M119.5 0.5L127.0 18.5M171.5 18.5L179.0 0.5" fill="none" stroke="#222"/><path d="M55 0L63 18.5H119.5L127.5 0Z" fill="#fff"/><path d="M55 0.5L63 18.5H119.5L127.5 0.5" fill="none" stroke="#222"/></svg>
<div class="t" style="left:66.29px;top:1047.00px;font-size:11.00px;font-family:'Liberation Sans',sans-serif;color:#000;font-weight:bold;transform:scaleX(0.9866);transform-origin:0 0;">Measures</div>
<div class="t" style="left:131.53px;top:1047.00px;font-size:11.00px;font-family:'Liberation Sans',sans-serif;color:#222;transform:scaleX(0.8469);transform-origin:0 0;">Gamma</div>
<div class="t" style="left:185.25px;top:1047.00px;font-size:11.00px;font-family:'Liberation Sans',sans-serif;color:#222;transform:scaleX(0.8576);transform-origin:0 0;">Luminance</div>
<div class="t" style="left:254.24px;top:1047.00px;font-size:11.00px;font-family:'Liberation Sans',sans-serif;color:#222;transform:scaleX(0.8638);transform-origin:0 0;">RGB Levels</div>
<svg class="a" style="left:1751px;top:1043px" width="15" height="16"><path d="M1 2Q1 1 2 1H12Q13 1 13 2V11Q13 14 10 14H4Q1 14 1 11Z" fill="#6a6a00" stroke="#3a3a00" stroke-width="0.8"/><rect x="3" y="3" width="8" height="5" fill="#fff"/><path d="M4 4H9V7H6V8L3.5 5.5L6 3V4Z" fill="#e02020"/><circle cx="10.5" cy="11.5" r="2.3" fill="#f0e000"/><circle cx="5" cy="12" r="1.6" fill="#c0b000"/></svg>
<div class="a" style="left:1846px;top:1045px;width:12px;height:12px;border:1px solid;border-color:#555 #ddd #ddd #555;background:#fff"></div>
<div class="t" style="left:1863.62px;top:1045.00px;font-size:11.00px;font-family:'Liberation Sans',sans-serif;color:#000;">Reference</div>
<div class="a" style="left:0;top:1061px;width:1920px;height:19px;background:#e9eef6"></div>
<div class="t" style="left:1.92px;top:1066.00px;font-size:12.00px;font-family:'Liberation Sans',sans-serif;color:#000;transform:scaleX(0.9193);transform-origin:0 0;">Ready</div>
<div class="a" style="left:1742px;top:1062px;width:75px;height:18px;border-left:1px solid #9fb2cc;border-top:1px solid #9fb2cc;background:#eef2f9"></div>
<div class="a" style="left:1820px;top:1062px;width:28px;height:18px;border-left:1px solid #9fb2cc;border-top:1px solid #9fb2cc;background:#eef2f9"></div>
<div class="a" style="left:1851px;top:1062px;width:33px;height:18px;border-left:1px solid #9fb2cc;border-top:1px solid #9fb2cc;background:#eef2f9"></div>
<div class="a" style="left:1887px;top:1062px;width:32px;height:18px;border-left:1px solid #9fb2cc;border-top:1px solid #9fb2cc;background:#eef2f9"></div>
<div class="t" style="left:1821.12px;top:1066.00px;font-size:11.00px;font-family:'Liberation Sans',sans-serif;color:#000;transform:scaleX(1.0509);transform-origin:0 0;">CAP</div>
<div class="t" style="left:1852.90px;top:1066.00px;font-size:11.00px;font-family:'Liberation Sans',sans-serif;color:#000;transform:scaleX(1.1321);transform-origin:0 0;">NUM</div>
</body></html>
